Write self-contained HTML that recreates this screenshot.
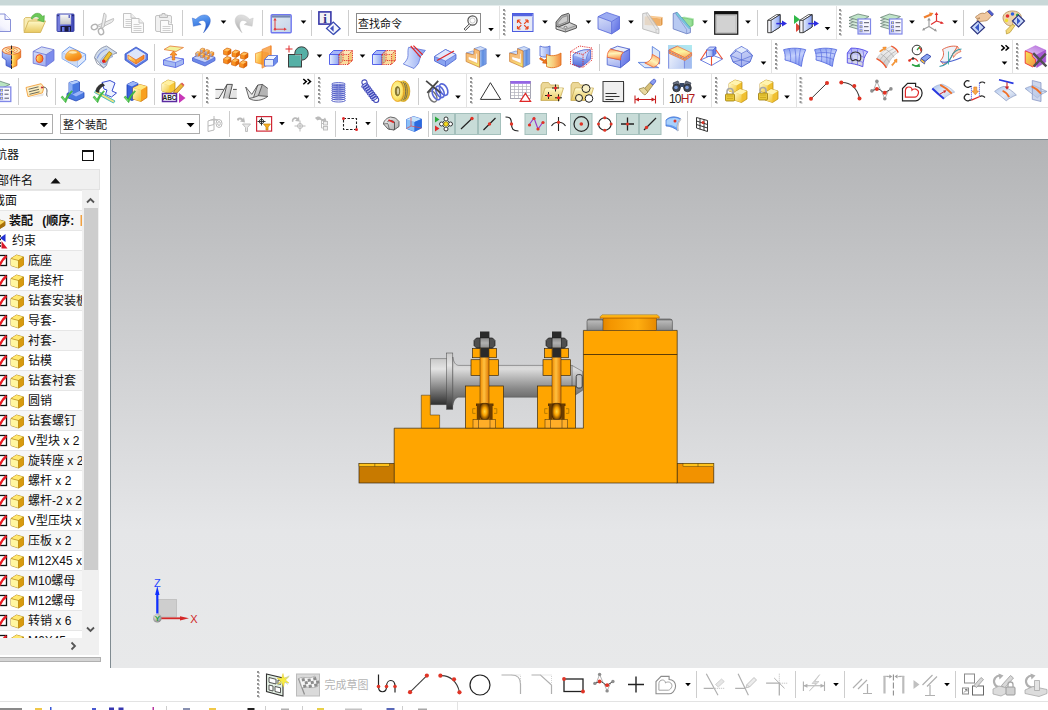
<!DOCTYPE html>
<html lang="zh-CN"><head><meta charset="utf-8"><title>NX</title>
<style>
html,body{margin:0;padding:0;}
body{width:1048px;height:710px;overflow:hidden;background:#fff;position:relative;
 font-family:"Liberation Sans","Noto Sans CJK SC",sans-serif;font-size:12px;color:#111;}
.abs{position:absolute;}
#topbar{left:0;top:0;width:1048px;height:5px;background:#c9d8d8;}
.hl{left:0;width:1048px;height:1px;background:#e3e3e3;}
svg{position:absolute;left:0;top:0;overflow:visible;}
.combo{border:1px solid #adadad;background:#fff;height:18px;box-sizing:content-box;}
.combo span{position:absolute;left:2px;top:1px;line-height:18px;font-size:11px;white-space:nowrap;}
#left{left:0;top:140px;width:110px;height:528px;background:#fff;overflow:hidden;}
#view{left:110px;top:139px;width:938px;height:529px;border-left:1px solid #808b91;border-top:1px solid #808b91;box-sizing:border-box;
 background:linear-gradient(to bottom,rgb(179,180,182) 0%,rgb(229,230,232) 74%,rgb(232,233,234) 100%);}
.row{position:absolute;left:0;width:82px;height:20px;border-top:1px solid #e6e6e6;box-sizing:border-box;white-space:nowrap;overflow:hidden;}
.row.alt{background:#f6f6f6;}
.row span{position:absolute;top:1px;line-height:19px;font-size:12px;}
</style></head><body>
<div id="topbar" class="abs"></div><div class="abs" style="left:0;top:5px;width:1048px;height:1px;background:#e4ecec"></div>

<div class="abs hl" style="top:39px"></div>
<div class="abs hl" style="top:73px"></div>
<div class="abs hl" style="top:107px"></div>
<div class="abs" style="left:0;top:139px;width:110px;height:1px;background:#808b91"></div>
<svg id="tb" width="1048" height="140" viewBox="0 0 1048 140">
<defs>
<linearGradient id="gB" x1="0" y1="0" x2="1" y2="1"><stop offset="0" stop-color="#dfe8ff"/><stop offset="1" stop-color="#5f7fe6"/></linearGradient>
<linearGradient id="gB2" x1="0" y1="0" x2="0" y2="1"><stop offset="0" stop-color="#c4d4ff"/><stop offset="1" stop-color="#4a66d8"/></linearGradient>
<linearGradient id="gBs" x1="0" y1="0" x2="0.300" y2="1"><stop offset="0" stop-color="#8098f0"/><stop offset="0.500" stop-color="#c4d0fc"/><stop offset="1" stop-color="#8ea2f4"/></linearGradient>
<linearGradient id="gNew" x1="1" y1="0" x2="0.200" y2="1"><stop offset="0" stop-color="#ffffff"/><stop offset="0.600" stop-color="#f4f4fe"/><stop offset="1" stop-color="#c8ccf4"/></linearGradient><linearGradient id="gSave" x1="0" y1="0" x2="1" y2="0"><stop offset="0" stop-color="#7c84e0"/><stop offset="0.500" stop-color="#5860cc"/><stop offset="1" stop-color="#4048b4"/></linearGradient>
<linearGradient id="gUndo" x1="0" y1="0" x2="0.300" y2="1"><stop offset="0" stop-color="#78b0f8"/><stop offset="0.500" stop-color="#4888e8"/><stop offset="1" stop-color="#2050c0"/></linearGradient><linearGradient id="gRedo" x1="0" y1="0" x2="0.300" y2="1"><stop offset="0" stop-color="#e8e8e8"/><stop offset="0.600" stop-color="#cccccc"/><stop offset="1" stop-color="#b0b0b0"/></linearGradient>
<linearGradient id="gOy" x1="0" y1="0" x2="1" y2="0.300"><stop offset="0" stop-color="#fff0a0"/><stop offset="0.500" stop-color="#fcb840"/><stop offset="1" stop-color="#f08020"/></linearGradient><linearGradient id="gOd" x1="0.200" y1="0" x2="0.800" y2="1"><stop offset="0" stop-color="#ffd878"/><stop offset="0.500" stop-color="#f8a028"/><stop offset="1" stop-color="#f07810"/></linearGradient><linearGradient id="gBp" x1="0" y1="0" x2="0.300" y2="1"><stop offset="0" stop-color="#d4dcf8"/><stop offset="1" stop-color="#a8b4f0"/></linearGradient>
<linearGradient id="gBr" x1="0" y1="0" x2="1" y2="0"><stop offset="0" stop-color="#a8c4f0"/><stop offset="0.500" stop-color="#5c8ce0"/><stop offset="1" stop-color="#88a8e8"/></linearGradient><linearGradient id="gOs" x1="0" y1="0" x2="0.200" y2="1"><stop offset="0" stop-color="#f8b878"/><stop offset="0.600" stop-color="#f8c070"/><stop offset="1" stop-color="#f4e470"/></linearGradient>
<linearGradient id="gBv" x1="0" y1="0" x2="1" y2="1"><stop offset="0" stop-color="#98a8f4"/><stop offset="1" stop-color="#5868e0"/></linearGradient>
<linearGradient id="gBl" x1="0" y1="0" x2="0.150" y2="1"><stop offset="0" stop-color="#f89858"/><stop offset="0.450" stop-color="#fff4b8"/><stop offset="1" stop-color="#f89048"/></linearGradient>
<linearGradient id="gBl2" x1="0.800" y1="0" x2="0.200" y2="1"><stop offset="0" stop-color="#f8a868"/><stop offset="0.500" stop-color="#fff4b8"/><stop offset="1" stop-color="#f8a058"/></linearGradient>
<linearGradient id="gBl3" x1="0.300" y1="0" x2="0.600" y2="1"><stop offset="0" stop-color="#fcd080"/><stop offset="0.500" stop-color="#fcf4a0"/><stop offset="1" stop-color="#f8b868"/></linearGradient>
<linearGradient id="gCy" x1="1" y1="0" x2="0.500" y2="1"><stop offset="0" stop-color="#b0ecf0"/><stop offset="1" stop-color="#a8c0f0"/></linearGradient>
<linearGradient id="gBp2" x1="0" y1="0" x2="1" y2="0.500"><stop offset="0" stop-color="#eef2fc"/><stop offset="1" stop-color="#c0d0f4"/></linearGradient>
<linearGradient id="gSew" x1="0" y1="0" x2="1" y2="0"><stop offset="0" stop-color="#f4f4a8"/><stop offset="0.500" stop-color="#f8c878"/><stop offset="1" stop-color="#f08840"/></linearGradient>
<linearGradient id="gS3" x1="0" y1="0" x2="0.200" y2="1"><stop offset="0" stop-color="#a8a8f8"/><stop offset="0.500" stop-color="#d0d4f8"/><stop offset="1" stop-color="#d4d4dc"/></linearGradient>
<linearGradient id="gSf" x1="0" y1="0" x2="1" y2="1"><stop offset="0" stop-color="#a8c0ec"/><stop offset="0.500" stop-color="#e4ecf8"/><stop offset="1" stop-color="#b0c0e0"/></linearGradient>
<linearGradient id="gPu" x1="0" y1="1" x2="1" y2="0"><stop offset="0" stop-color="#e4d0f4"/><stop offset="1" stop-color="#b468dc"/></linearGradient><linearGradient id="gYo" x1="0" y1="0" x2="1" y2="1"><stop offset="0" stop-color="#f8e858"/><stop offset="1" stop-color="#f09040"/></linearGradient>
<linearGradient id="gTag" x1="0" y1="0" x2="1" y2="1"><stop offset="0" stop-color="#fdf8e0"/><stop offset="1" stop-color="#f8e098"/></linearGradient>
<linearGradient id="gWcs" x1="0" y1="0" x2="1" y2="1"><stop offset="0" stop-color="#e0eaf2"/><stop offset="1" stop-color="#c4d4e8"/></linearGradient>
<radialGradient id="gDisc" cx="0.450" cy="0.450" r="0.650"><stop offset="0" stop-color="#fffac0"/><stop offset="0.600" stop-color="#fce870"/><stop offset="1" stop-color="#f0b828"/></radialGradient>
<linearGradient id="gB3" x1="0" y1="0" x2="1" y2="0"><stop offset="0" stop-color="#e6eeff"/><stop offset="1" stop-color="#8aa2f0"/></linearGradient>
<linearGradient id="gY" x1="0" y1="0" x2="1" y2="1"><stop offset="0" stop-color="#fffbd0"/><stop offset="1" stop-color="#f2c430"/></linearGradient>
<linearGradient id="gY2" x1="0" y1="0" x2="0" y2="1"><stop offset="0" stop-color="#fff3a0"/><stop offset="1" stop-color="#eaa800"/></linearGradient>
<linearGradient id="gO" x1="0" y1="0" x2="1" y2="1"><stop offset="0" stop-color="#ffe29a"/><stop offset="1" stop-color="#f07c10"/></linearGradient>
<linearGradient id="gO2" x1="0" y1="0" x2="0" y2="1"><stop offset="0" stop-color="#ffd27a"/><stop offset="1" stop-color="#ee7a10"/></linearGradient>
<linearGradient id="gG" x1="0" y1="0" x2="1" y2="1"><stop offset="0" stop-color="#f4f4f4"/><stop offset="1" stop-color="#a8a8a8"/></linearGradient>
<linearGradient id="gG2" x1="0" y1="0" x2="0" y2="1"><stop offset="0" stop-color="#fafafa"/><stop offset="1" stop-color="#c4c4c4"/></linearGradient>
<linearGradient id="gFold" x1="0" y1="0" x2="0" y2="1"><stop offset="0" stop-color="#fff9c8"/><stop offset="1" stop-color="#e8c860"/></linearGradient>
<linearGradient id="gCyl" x1="0" y1="0" x2="0" y2="1"><stop offset="0" stop-color="#c9c9c9"/><stop offset="0.22" stop-color="#e4e4e4"/><stop offset="0.6" stop-color="#8c8c8c"/><stop offset="1" stop-color="#2e2e2e"/></linearGradient>
<linearGradient id="gCyl2" x1="0" y1="0" x2="0" y2="1"><stop offset="0" stop-color="#c4c4c4"/><stop offset="0.25" stop-color="#dcdcdc"/><stop offset="0.65" stop-color="#8a8a8a"/><stop offset="1" stop-color="#545454"/></linearGradient>
<linearGradient id="gRod" x1="0" y1="0" x2="1" y2="0"><stop offset="0" stop-color="#f08c00"/><stop offset="0.45" stop-color="#ffc040"/><stop offset="1" stop-color="#e07800"/></linearGradient>
<radialGradient id="gBall" cx="0.5" cy="0.5" r="0.55"><stop offset="0" stop-color="#ffd848"/><stop offset="0.45" stop-color="#f8a000"/><stop offset="1" stop-color="#5a3000"/></radialGradient><linearGradient id="gNut" x1="0" y1="0" x2="0" y2="1"><stop offset="0" stop-color="#8c8c8c"/><stop offset="0.500" stop-color="#b0b0b0"/><stop offset="1" stop-color="#909090"/></linearGradient><linearGradient id="gBolt" x1="0" y1="0" x2="0" y2="1"><stop offset="0" stop-color="#6e6e6e"/><stop offset="0.200" stop-color="#b6b6b6"/><stop offset="1" stop-color="#8a8a8a"/></linearGradient><linearGradient id="gCap" x1="0" y1="0" x2="1" y2="0"><stop offset="0" stop-color="#e48600"/><stop offset="0.150" stop-color="#f49600"/><stop offset="0.650" stop-color="#ffae10"/><stop offset="1" stop-color="#e88a00"/></linearGradient><linearGradient id="gLip" x1="0" y1="0" x2="0" y2="1"><stop offset="0" stop-color="#ffcc30"/><stop offset="0.500" stop-color="#ffb010"/><stop offset="1" stop-color="#e88800"/></linearGradient>
<radialGradient id="gSph" cx="0.4" cy="0.35" r="0.7"><stop offset="0" stop-color="#f0f0f0"/><stop offset="1" stop-color="#808080"/></radialGradient>
</defs><g transform="translate(0,13.5)"><path d="M-12 0.500H5L10.500 6V18H-12z" fill="url(#gNew)" stroke="#7c84d4" stroke-width=".9"/><path d="M5 0.500V6H10.500" fill="#f4f4ff" stroke="#7c84d4" stroke-width=".9"/></g><g transform="translate(23,13.5)"><path d="M1 18V5.500l1.500-1.500h5l1.500 1.500h8v3" fill="#f8ecb4" stroke="#d8bc68" stroke-width=".9"/><path d="M1 19l4.500-11.500h17l-5 11.500z" fill="url(#gFold)" stroke="#d4b458" stroke-width=".9"/><path d="M8 4.500c2.500-5.500 9-6.500 11.500-1.500l1.800-1 -0.300 6.500-6.500-2 2-1.200c-2-3-5.500-2.500-7.500 0.500z" fill="#6cc858" stroke="#48a43c" stroke-width=".6"/></g><g transform="translate(55.5,13.5)"><rect x="1.500" y="0.500" width="17" height="17.500" rx=".8" fill="url(#gSave)" stroke="#3038a0" stroke-width=".9"/><rect x="4.500" y="1" width="11" height="10" fill="url(#gG2)" stroke="#8890d8" stroke-width=".5"/><rect x="13" y="1.500" width="1.500" height="3" fill="#6068c0"/><rect x="5" y="12.500" width="10.500" height="5.500" fill="#1a1a3c"/><rect x="6.500" y="13.500" width="2.500" height="4.500" fill="#6878e8"/><rect x="13" y="13.500" width="1.500" height="4.500" fill="#5060c8"/><rect x="2" y="1.500" width="1.200" height="1.200" fill="#1a1a50"/><rect x="16.800" y="1.500" width="1.200" height="1.200" fill="#1a1a50"/></g><rect x="83" y="10" width="1" height="26" fill="#cdcdcd"/><g transform="translate(90.5,13)"><g fill="#fff" stroke="#b4b4b4" stroke-width="1.400"><ellipse cx="4" cy="14" rx="3.200" ry="2.600" transform="rotate(-25 4 14)"/><ellipse cx="10.500" cy="18.500" rx="2.600" ry="3.200" transform="rotate(-15 10.500 18.500)"/></g><path d="M6.500 12.500l16.500-7c0.500 1.500-0.500 3-2 4l-10 5z" fill="#e9e9e9" stroke="#b4b4b4" stroke-width=".8"/><path d="M10.500 15.500l3-15.500c1.500 0.500 2.500 2 2 4.500l-2 9.500z" fill="#e9e9e9" stroke="#b4b4b4" stroke-width=".8"/></g><g transform="translate(123,13)"><g transform="translate(0,0)"><path d="M0.500 0.500h7.500l4.500 4.500v9.500h-12z" fill="#fbfbfb" stroke="#c4c4c4"/><path d="M8 0.500v4.500h4.500" fill="#f0f0f0" stroke="#c4c4c4"/><path d="M2.500 6.500h6M2.500 8.500h8M2.500 10.500h8M2.500 12.500h8" stroke="#d0d0d0"/></g><g transform="translate(8,5)"><path d="M0.500 0.500h7.500l4.500 4.500v9.500h-12z" fill="#fbfbfb" stroke="#c4c4c4"/><path d="M8 0.500v4.500h4.500" fill="#f0f0f0" stroke="#c4c4c4"/><path d="M2.500 6.500h6M2.500 8.500h8M2.500 10.500h8M2.500 12.500h8" stroke="#d0d0d0"/></g></g><g transform="translate(155,13)"><rect x="0.500" y="2.500" width="16" height="16" rx="1.500" fill="#f1f1f1" stroke="#c4c4c4"/><path d="M4.500 4.500v-2.500h2.500v-1.500h3v1.500h2.500v2.500z" fill="#e4e4e4" stroke="#bcbcbc"/><path d="M5.500 7.500h8l4 4v8h-12z" fill="#fbfbfb" stroke="#c4c4c4"/><path d="M13.500 7.500v4h4" fill="#f0f0f0" stroke="#c4c4c4"/><path d="M7.500 13.500h8M7.500 15.500h8M7.500 17.500h8" stroke="#d0d0d0"/></g><rect x="182" y="10" width="1" height="26" fill="#cdcdcd"/><g transform="translate(192,14.5)"><path d="M0.300 3.500L1.400 11.800L9.200 10L6.300 7.800C8 5.800 11.500 5.200 13 7.200C15 10 13.500 14 11.500 18.300C16 13.500 19.800 8 17.800 3.500C15.800-0.800 9-0.800 3.800 4.800Z" fill="url(#gUndo)" stroke="#2c5cc4" stroke-width=".4"/></g><path d="M220.7 20.5h5.600l-2.800 3.200z" fill="#000"/><g transform="translate(235,14.5)"><g transform="translate(18.500,0) scale(-1,1)"><path d="M0.300 3.500L1.400 11.800L9.200 10L6.300 7.800C8 5.800 11.500 5.200 13 7.200C15 10 13.500 14 11.500 18.300C16 13.500 19.800 8 17.800 3.500C15.800-0.800 9-0.800 3.800 4.800Z" fill="url(#gRedo)" stroke="#c0c0c0" stroke-width=".4"/></g></g><rect x="262" y="10" width="1" height="26" fill="#cdcdcd"/><g transform="translate(270.5,14)"><rect x="0.700" y="0.700" width="20" height="18" rx="1" fill="url(#gWcs)" stroke="#7078f0" stroke-width="1.400"/><rect x="1.400" y="1.400" width="18.600" height="2.200" fill="#7488b0"/><path d="M4.500 5.500v9.700h10" fill="none" stroke="#e04040" stroke-width="1"/><path d="M4.500 3.800l-1.600 2.800h3.200zM16.300 15.200l-2.800-1.600v3.200z" fill="#e04040"/><circle cx="4.500" cy="15.200" r="1.200" fill="#e04040"/></g><path d="M300.7 20.5h5.600l-2.800 3.200z" fill="#000"/><rect x="311" y="10" width="1" height="26" fill="#cdcdcd"/><g transform="translate(318,10.5)"><rect x="0.900" y="1.400" width="12" height="12.200" fill="#f2f2f4" stroke="#3838a8" stroke-width="1.600"/><text x="7" y="12" font-family="Liberation Serif,serif" font-weight="bold" font-size="13" text-anchor="middle" fill="#303088" style="opacity:.99">i</text><path d="M9.500 18.500l6.500-6.500 7 6.500-7 6z" fill="#8098d8"/><path d="M8.500 18l6.800-6.500 6.700 6.500-6.700 6z" fill="#f4f6fc" stroke="#3848b0" stroke-width="1.200"/><path d="M12 18l3.600-3.300v6.600z" fill="#4050c0"/></g><rect x="348" y="10" width="1" height="26" fill="#cdcdcd"/><path d="M488.2 28.0h5.600l-2.800 3.200z" fill="#000"/><rect x="499" y="6" width="1" height="33" fill="#e2e2e2"/><rect x="504" y="10" width="2" height="2" fill="#d2d2d2"/><rect x="503" y="9" width="2" height="2" fill="#949494"/><rect x="504" y="14" width="2" height="2" fill="#d2d2d2"/><rect x="503" y="13" width="2" height="2" fill="#949494"/><rect x="504" y="18" width="2" height="2" fill="#d2d2d2"/><rect x="503" y="17" width="2" height="2" fill="#949494"/><rect x="504" y="22" width="2" height="2" fill="#d2d2d2"/><rect x="503" y="21" width="2" height="2" fill="#949494"/><rect x="504" y="26" width="2" height="2" fill="#d2d2d2"/><rect x="503" y="25" width="2" height="2" fill="#949494"/><rect x="504" y="30" width="2" height="2" fill="#d2d2d2"/><rect x="503" y="29" width="2" height="2" fill="#949494"/><rect x="504" y="34" width="2" height="2" fill="#d2d2d2"/><rect x="503" y="33" width="2" height="2" fill="#949494"/><g transform="translate(512,13)"><rect x="0.500" y="0.500" width="20.500" height="18" fill="#e6eaf6" stroke="#4c5ce0"/><rect x="1" y="1" width="19.500" height="2" fill="#5464e0"/><rect x="1" y="3" width="19.500" height="1" fill="#c4ccf4"/><path d="M5.5 7l3.8 3.8M5.5 7h3M5.5 7v3" stroke="#e84820" stroke-width="1.200" fill="none"/><path d="M16 7l-3.8 3.8M16 7h-3M16 7v3" stroke="#e84820" stroke-width="1.200" fill="none"/><path d="M5.5 16l3.8 -3.8M5.5 16h3M5.5 16v-3" stroke="#e84820" stroke-width="1.200" fill="none"/><path d="M16 16l-3.8 -3.8M16 16h-3M16 16v-3" stroke="#e84820" stroke-width="1.200" fill="none"/></g><path d="M542.2 20.5h5.600l-2.800 3.200z" fill="#000"/><g transform="translate(555,12.5)"><path d="M1 13.500V9.500L6.500 3L13.500 0.800L14.500 2V10L3.500 14.500Z" fill="#b0b0b0" stroke="#484848" stroke-width=".9"/><path d="M3 12.800V10L7.500 4.800L12.500 3.200V9Z" fill="#cdcdcd" stroke="#707070" stroke-width=".6"/><path d="M1 13.500L3.500 14.500L14.500 10L21.500 13V15.500L10.500 19.500L1 16.500Z" fill="url(#gG)" stroke="#484848" stroke-width=".9"/><path d="M3.500 14.500L10.500 17L21.500 13M10.500 17V19.500" fill="none" stroke="#707070" stroke-width=".6"/><ellipse cx="10.500" cy="14.800" rx="1.500" ry=".9" fill="#fff" stroke="#444" stroke-width=".6"/></g><path d="M585.7 20.5h5.600l-2.800 3.200z" fill="#000"/><g transform="translate(598,11)"><path d="M0 5.700L13.600 10.700V22.900L0 17.900Z" fill="url(#gBp)"/><path d="M0 5.700L8.600 1.400L21.500 5.700L13.600 10.700Z" fill="#9cacf2"/><path d="M13.600 10.700L21.500 5.700V17.900L13.600 22.900Z" fill="url(#gBv)"/><path d="M0 5.700L8.600 1.400L21.500 5.700V17.900L13.600 22.900L0 17.900ZM0 5.700L13.600 10.700L21.500 5.700M13.600 10.700V22.900" fill="none" stroke="#5466d8" stroke-width=".8"/></g><path d="M628.2 20.5h5.600l-2.800 3.200z" fill="#000"/><g transform="translate(642,11)"><path d="M2.600 5.500L6 4.500L20.500 6L18.800 7.400Z" fill="#f8c890"/><path d="M2.600 5.500L18.800 7.400V15L2.600 14Z" fill="#f0b068"/><path d="M18.800 7.400L20.500 6V13.500L18.800 15Z" fill="#e09848"/><path d="M0.700 2.600L5.500 1.700L16.900 17.900V22.700L13 21.700L0.700 17.900Z" fill="#e2e2e2" fill-opacity=".78" stroke="#b4b4b4" stroke-width=".8"/><path d="M5.500 1.700L4 3L14 18.500L16.900 17.900M14 18.500V22" fill="none" stroke="#c0c0c0" stroke-width=".7"/></g><g transform="translate(673,11)"><path d="M8.800 6.500L11 5.500L20.500 7.200L19.300 8.400Z" fill="#c0f0c0"/><path d="M8.800 6.500L19.300 8.400V15L14.500 16Z" fill="#98e098" stroke="#58b058" stroke-width=".6"/><path d="M19.300 8.400L20.500 7.200V14L19.300 15Z" fill="#70c870"/><path d="M0.200 2.600L4 1.300L17.400 17V21.700L13.600 22.700L0.200 17.900Z" fill="#b8caf2" stroke="#6478c0" stroke-width=".8"/><path d="M4 1.300L2.800 2.800L13.600 18.500V22.700" fill="none" stroke="#7088c8" stroke-width=".6"/><path d="M4 1.300L17.400 17L15.800 17.600L2.800 2.800Z" fill="#78ccdc" stroke="#48a0b8" stroke-width=".4"/></g><path d="M702.2 20.5h5.600l-2.800 3.200z" fill="#000"/><g transform="translate(714,11)"><rect x="0.700" y="0.700" width="23" height="22.500" fill="#d2d2d2" stroke="#222" stroke-width="1.300"/><rect x="0.500" y="0.500" width="23.400" height="2.800" fill="#111"/><rect x="2.500" y="4.500" width="19.500" height="17" fill="none" stroke="#bdbdbd"/></g><path d="M745.2 20.5h5.600l-2.800 3.200z" fill="#000"/><rect x="757" y="10" width="1" height="26" fill="#cdcdcd"/><g transform="translate(766.5,13)"><path d="M1.200 7.300L4.600 7.300L13.600 1.600V14L4.600 19.700H1.200Z" fill="#f4f4f8" stroke="#2c2c2c" stroke-width=".9"/><path d="M4.600 7.300L13.600 1.600V14L4.600 19.700Z" fill="url(#gB3)" stroke="#2c2c2c" stroke-width=".8"/><path d="M1.200 7.300L10 1.600H13.600" fill="none" stroke="#2c2c2c" stroke-width=".8"/><path d="M9.800 10.600h7" stroke="#2c2ce0" stroke-width="1.500"/><path d="M20.500 10.600l-5-3v6z" fill="#2c2ce0"/></g><g transform="translate(793.5,13)"><path d="M0.500 2l6 4.500-6 4.500z" fill="#30b848"/><path d="M2.500 10l5.500 4.500-5.500 4.500z" fill="#e04838"/><g transform="translate(5,0)"><path d="M1.200 7.300L4.600 7.300L13.600 1.600V14L4.600 19.700H1.200Z" fill="#f4f4f8" stroke="#2c2c2c" stroke-width=".9"/><path d="M4.600 7.300L13.600 1.600V14L4.600 19.700Z" fill="url(#gB3)" stroke="#2c2c2c" stroke-width=".8"/><path d="M1.200 7.300L10 1.600H13.600" fill="none" stroke="#2c2c2c" stroke-width=".8"/><path d="M9.800 10.600h7" stroke="#2c2ce0" stroke-width="1.500"/><path d="M20.500 10.600l-5-3v6z" fill="#2c2ce0"/></g></g><path d="M824.7 27.0h5.600l-2.800 3.200z" fill="#000"/><rect x="836" y="6" width="1" height="33" fill="#e2e2e2"/><rect x="840" y="10" width="2" height="2" fill="#d2d2d2"/><rect x="839" y="9" width="2" height="2" fill="#949494"/><rect x="840" y="14" width="2" height="2" fill="#d2d2d2"/><rect x="839" y="13" width="2" height="2" fill="#949494"/><rect x="840" y="18" width="2" height="2" fill="#d2d2d2"/><rect x="839" y="17" width="2" height="2" fill="#949494"/><rect x="840" y="22" width="2" height="2" fill="#d2d2d2"/><rect x="839" y="21" width="2" height="2" fill="#949494"/><rect x="840" y="26" width="2" height="2" fill="#d2d2d2"/><rect x="839" y="25" width="2" height="2" fill="#949494"/><rect x="840" y="30" width="2" height="2" fill="#d2d2d2"/><rect x="839" y="29" width="2" height="2" fill="#949494"/><rect x="840" y="34" width="2" height="2" fill="#d2d2d2"/><rect x="839" y="33" width="2" height="2" fill="#949494"/><g transform="translate(848.5,11.5)"><path d="M0.500 15l9-3.500 11 2.500-8 4.500z" fill="#d4e8d8" stroke="#5a7468" stroke-width=".7"/><path d="M0.500 12l9-3.500 11 2.500-8 4.500z" fill="#d4e8d8" stroke="#5a7468" stroke-width=".7"/><path d="M0.500 9l9-3.500 11 2.500-8 4.500z" fill="#d4e8d8" stroke="#5a7468" stroke-width=".7"/><path d="M0.500 6l9-3.500 11 2.500-8 4.500z" fill="#c0e4c8" stroke="#5a7468" stroke-width=".7"/><rect x="9.500" y="7.500" width="12.500" height="15" fill="url(#gNew)" stroke="#8088e8" stroke-width="1.200"/><g fill="#7880dc"><rect x="11" y="9.800" width="3" height="2.800"/><rect x="11" y="13.800" width="3" height="2.800"/><rect x="11" y="17.800" width="3" height="2.800"/></g><g fill="#f8f060"><rect x="12" y="10.700" width="1.200" height="1.200"/><rect x="12" y="14.700" width="1.200" height="1.200"/><rect x="12" y="18.700" width="1.200" height="1.200"/></g><path d="M15.500 11.200h5M15.500 15.200h4.500M15.500 19.200h5" stroke="#55556a" stroke-width="1"/></g><g transform="translate(880,11.5)"><path d="M0.500 15l9-3.500 11 2.500-8 4.500z" fill="#d4e8d8" stroke="#5a7468" stroke-width=".7"/><path d="M0.500 12l9-3.500 11 2.500-8 4.500z" fill="#d4e8d8" stroke="#5a7468" stroke-width=".7"/><path d="M0.500 9l9-3.500 11 2.500-8 4.500z" fill="#d4e8d8" stroke="#5a7468" stroke-width=".7"/><path d="M0.500 6l9-3.500 11 2.500-8 4.500z" fill="#c0e4c8" stroke="#5a7468" stroke-width=".7"/><rect x="9.500" y="7.500" width="12.500" height="15" fill="url(#gNew)" stroke="#8088e8" stroke-width="1.200"/><g fill="#7880dc"><rect x="11" y="9.800" width="3" height="2.800"/><rect x="11" y="13.800" width="3" height="2.800"/><rect x="11" y="17.800" width="3" height="2.800"/></g><g fill="#f8f060"><rect x="12" y="10.700" width="1.200" height="1.200"/><rect x="12" y="14.700" width="1.200" height="1.200"/><rect x="12" y="18.700" width="1.200" height="1.200"/></g><path d="M15.500 11.200h5M15.500 15.200h4.500M15.500 19.200h5" stroke="#55556a" stroke-width="1"/></g><path d="M909.2 20.5h5.600l-2.800 3.200z" fill="#000"/><g transform="translate(922,13)"><path d="M7 13.500v-7M7 13.500l-6 3M7 13.500l6.500 4" stroke="#9a9a9a" stroke-width="1.100" fill="none"/><path d="M7 4.500l-1.800 3h3.600zM0 17.500l3.200-0.200-1.500-2.600zM15 18.500l-3-0.500 1.600-2.500z" fill="#9a9a9a"/><path d="M14.500 8v-7M14.500 8l-5.500 3.500M14.500 8l6 2" stroke="#e03030" stroke-width="1.200" fill="none"/><path d="M14.500 -1l-1.800 3h3.600zM22 10.500l-3-2.200-0.800 2.800z" fill="#e03030"/><path d="M2 4.500l7-3" stroke="#f08030" stroke-width="2.400"/><path d="M11.500 0l-4.500-0.500 1.800 4z" fill="#f08030"/></g><path d="M952.2 20.5h5.600l-2.800 3.200z" fill="#000"/><rect x="963" y="10" width="1" height="26" fill="#cdcdcd"/><g transform="translate(970.5,11)"><path d="M7 4.500c2-2 5-3 7-2l3.500-2.500 4.500 4-3 3c-1 2-3 3-5 3l-5 0.500c-2 0-3-1-2.500-2l3-1.500-3.500 0.500c-1.500-0.500-1-2.500 1-3z" fill="#f0c8a0" stroke="#a87848" stroke-width=".7"/><path d="M17 0.500l2-1.500 4 4-1.500 2z" fill="#5060d0" stroke="#303890" stroke-width=".6"/><path d="M0.500 16.500l7-6.500 6.500 6.500-7 6.500z" fill="#c8d8f8" stroke="#2c3480" stroke-width="1.200"/><path d="M4.500 16.500l4-4v8z" fill="#3a58c8"/></g><g transform="translate(1001,10.5)"><path d="M2 7c0-4 5-7 10.500-6.500s8.500 3.500 7.500 7.500c-0.800 3-4 3-6 2.500-2.500-0.500-3 1.500-2 3 0.800 1.500-1 2.500-3 2-4-1-7-4.500-7-8.500z" fill="#f0d4a8" stroke="#b08850" stroke-width=".8"/><circle cx="6.500" cy="5.500" r="1.800" fill="#e03030"/><circle cx="11.500" cy="3.500" r="1.800" fill="#3060e0"/><circle cx="5.500" cy="10" r="1.700" fill="#f0e030"/><circle cx="16.500" cy="4.500" r="1.600" fill="#30a840"/><path d="M5 20l6-6 3 1-5 7-3.500 1.500z" fill="#f4d878" stroke="#b89830" stroke-width=".7"/><path d="M11.500 10.500l6-6 6 6-6 6z" fill="#c8d8f8" stroke="#2c3480" stroke-width="1.200"/><path d="M19.500 10.500l-3.500-3.500v7z" fill="#3a58c8"/></g><g transform="translate(2,45.5)"><path d="M0.300 5.500v6.500l3.700 2.500v5.500l5.500 2.500v-18z" fill="url(#gB2)" stroke="#3048c0" stroke-width=".7"/><path d="M18.700 5.500v6.500l-3.700 2.500v5.500l-5.500 2.500v-18z" fill="url(#gOy)" stroke="#d85818" stroke-width=".7"/><ellipse cx="9.500" cy="5" rx="9.200" ry="3.800" fill="#fbe4b8" stroke="#e05818" stroke-width=".8"/><ellipse cx="9.500" cy="5" rx="6" ry="2.400" fill="none" stroke="#f08838" stroke-width=".8"/><ellipse cx="9.500" cy="5" rx="3" ry="1.200" fill="none" stroke="#e86020" stroke-width=".7"/><path d="M9.500 0v23.500" stroke="#222" stroke-width="1" stroke-dasharray="3.500 1.500"/><path d="M10.700 3v19" stroke="#f8e468" stroke-width="1.200" stroke-dasharray="2.500 1.200"/></g><g transform="translate(33,45.5)"><path d="M0.200 5.900L8.600 1.300L21 4.200L13.100 9.200Z" fill="#d4dcf4"/><path d="M0.200 5.900L13.100 9.200V20.800L0.200 17.800Z" fill="url(#gBp)"/><path d="M13.100 9.200L21 4.200V15L13.100 20.800Z" fill="#7c8cec"/><path d="M0.200 5.900L8.600 1.300L21 4.200V15L13.100 20.800L0.200 17.800ZM0.200 5.900L13.100 9.200L21 4.200M13.100 9.200V20.800" fill="none" stroke="#6670d4" stroke-width=".8"/><ellipse cx="6.500" cy="13.100" rx="3.500" ry="4" fill="url(#gOy)" stroke="#e83820" stroke-width=".9"/></g><g transform="translate(62,45.5)"><path d="M0.200 7L7.500 1.300L23.600 8.800V14.500L15.500 21.800L0.200 13.200Z" fill="#dfe9fb" stroke="#5c8ce4" stroke-width=".9"/><path d="M0.200 7L15.500 15.500L23.600 8.800M15.500 15.500V21.800" fill="none" stroke="#8cb0f0" stroke-width=".7"/><path d="M0.200 7L15.500 15.500V21.800L0.200 13.200Z" fill="#c8d8f4" opacity=".8"/><path d="M3.300 11.500c0.500-3.500 3-6.800 7.500-7s8 2.500 8.700 6c0.500 2.500-3 5-8 5s-8.500-1.500-8.200-4z" fill="url(#gOd)" stroke="#f08828" stroke-width=".6"/><ellipse cx="10.800" cy="6.800" rx="4.200" ry="1.600" fill="#ffe6a8" stroke="#f0a040" stroke-width=".5"/></g><g transform="translate(94,45.5)"><path d="M0.500 12c2-6 6-10 12-11.500l10.500 7c-5 1-9 5-10.500 12.500l-3 2.500z" fill="#d0dcec" stroke="#8890a4" stroke-width=".9"/><path d="M0.500 12l2.500 6 7 4.500" fill="none" stroke="#8890a4" stroke-width=".9"/><path d="M3 13c2-5 5-8 10-9.500" fill="none" stroke="#8aa0e0" stroke-width="1.200"/><path d="M6 16.500c1.500-4 4-7 8-8.500l5 3c-4 1.500-6 4-7.500 8.500z" fill="#b8c8ec" stroke="#8a9ac8" stroke-width=".6"/><path d="M8.500 15l6.500-9 3 2-6.500 9z" fill="#f0c030" stroke="#a07808" stroke-width=".7"/><circle cx="9.800" cy="15.800" r="1.700" fill="#e02020"/></g><g transform="translate(124.5,45.5)"><path d="M0.500 8.500l11-7 11.500 7v6l-11.500 7.500-11-7.500z" fill="#5c7ce4" stroke="#3c58c8" stroke-width=".8"/><path d="M2.500 9l9-5.800 9.500 5.800v4.500l-9.500 6.200-9-6.200z" fill="#c4d2f6"/><path d="M2.500 9l9-5.800 9.500 5.800-9.500 5z" fill="#dde6fb"/><path d="M3.500 9.500l8 5 8-5v3.800l-8 5.200-8-5.200z" fill="url(#gOy)" stroke="#e86018" stroke-width=".7"/><path d="M11.500 14.500v4" stroke="#e86018" stroke-width=".6"/></g><g transform="translate(162.5,44.5)"><path d="M1.500 5l6-3.500 13.500 1.500-7.500 4z" fill="#f2f29a" stroke="#e88848" stroke-width=".9"/><path d="M1 15.500l7-3 13 2v5l-8 3.500-12-2.500z" fill="#a4b8f2" stroke="#4c5ce0" stroke-width=".8"/><path d="M1 15.500l7-3 13 2-8 3.500z" fill="#dce6fb" stroke="#4c5ce0" stroke-width=".6"/><path d="M13 18v5" stroke="#4c5ce0" stroke-width=".6"/><path d="M9.800 15.500v-5h-2.300l3.500-4 3.500 4h-2.300v5z" fill="#f8982c" stroke="#d86010" stroke-width=".6"/></g><g transform="translate(192,45.5)"><path d="M0.500 12.500l9-4.500 13.500 4v3l-10 5.500-12.500-5z" fill="#6c88e8" stroke="#4a62d0" stroke-width=".8"/><path d="M0.500 12.500l9-4.500 13.500 4-10 5z" fill="#c4d2f8" stroke="#4a62d0" stroke-width=".6"/><g transform="translate(8,2.5) scale(0.75)"><path d="M0 2l3-2 3.500 1v3.500l-3 2-3.500-1z" fill="#a8a8c0"/><path d="M0 2l3-2 3.500 1-3 2z" fill="#ffc868"/><path d="M3.500 3l3-2v3.500l-3 2z" fill="#f89020"/><path d="M0 2l3-2 3.500 1v3.500l-3 2-3.500-1z" fill="none" stroke="#c85808" stroke-width=".5"/></g><g transform="translate(12.5,4) scale(0.75)"><path d="M0 2l3-2 3.500 1v3.500l-3 2-3.500-1z" fill="#a8a8c0"/><path d="M0 2l3-2 3.500 1-3 2z" fill="#ffc868"/><path d="M3.500 3l3-2v3.500l-3 2z" fill="#f89020"/><path d="M0 2l3-2 3.500 1v3.500l-3 2-3.500-1z" fill="none" stroke="#c85808" stroke-width=".5"/></g><g transform="translate(17,6) scale(0.75)"><path d="M0 2l3-2 3.500 1v3.500l-3 2-3.500-1z" fill="#a8a8c0"/><path d="M0 2l3-2 3.500 1-3 2z" fill="#ffc868"/><path d="M3.500 3l3-2v3.500l-3 2z" fill="#f89020"/><path d="M0 2l3-2 3.500 1v3.500l-3 2-3.500-1z" fill="none" stroke="#c85808" stroke-width=".5"/></g><g transform="translate(3.5,6) scale(0.75)"><path d="M0 2l3-2 3.500 1v3.500l-3 2-3.500-1z" fill="#a8a8c0"/><path d="M0 2l3-2 3.500 1-3 2z" fill="#ffc868"/><path d="M3.500 3l3-2v3.500l-3 2z" fill="#f89020"/><path d="M0 2l3-2 3.500 1v3.500l-3 2-3.500-1z" fill="none" stroke="#c85808" stroke-width=".5"/></g><g transform="translate(8,7.5) scale(0.75)"><path d="M0 2l3-2 3.500 1v3.500l-3 2-3.500-1z" fill="#a8a8c0"/><path d="M0 2l3-2 3.500 1-3 2z" fill="#ffc868"/><path d="M3.500 3l3-2v3.500l-3 2z" fill="#f89020"/><path d="M0 2l3-2 3.500 1v3.500l-3 2-3.500-1z" fill="none" stroke="#c85808" stroke-width=".5"/></g><g transform="translate(12.5,9.5) scale(0.75)"><path d="M0 2l3-2 3.500 1v3.500l-3 2-3.500-1z" fill="#a8a8c0"/><path d="M0 2l3-2 3.500 1-3 2z" fill="#ffc868"/><path d="M3.500 3l3-2v3.500l-3 2z" fill="#f89020"/><path d="M0 2l3-2 3.500 1v3.500l-3 2-3.500-1z" fill="none" stroke="#c85808" stroke-width=".5"/></g></g><g transform="translate(223,46.5)"><g transform="translate(0.5,1.5) scale(1.15)"><path d="M0 2l3-2 3.500 1v3.500l-3 2-3.500-1z" fill="#f89020"/><path d="M0 2l3-2 3.500 1-3 2z" fill="#ffc060"/><path d="M3.500 3l3-2v3.500l-3 2z" fill="#e06808"/><path d="M0 2l3-2 3.500 1v3.500l-3 2-3.500-1z" fill="none" stroke="#c85808" stroke-width=".5"/></g><g transform="translate(9,3.5) scale(1.15)"><path d="M0 2l3-2 3.500 1v3.500l-3 2-3.500-1z" fill="#f89020"/><path d="M0 2l3-2 3.500 1-3 2z" fill="#ffc060"/><path d="M3.500 3l3-2v3.500l-3 2z" fill="#e06808"/><path d="M0 2l3-2 3.500 1v3.500l-3 2-3.500-1z" fill="none" stroke="#c85808" stroke-width=".5"/></g><g transform="translate(17.5,5.5) scale(1.15)"><path d="M0 2l3-2 3.500 1v3.500l-3 2-3.500-1z" fill="#f89020"/><path d="M0 2l3-2 3.500 1-3 2z" fill="#ffc060"/><path d="M3.500 3l3-2v3.500l-3 2z" fill="#e06808"/><path d="M0 2l3-2 3.500 1v3.500l-3 2-3.500-1z" fill="none" stroke="#c85808" stroke-width=".5"/></g><g transform="translate(0.5,10) scale(1.15)"><path d="M0 2l3-2 3.500 1v3.500l-3 2-3.500-1z" fill="#f89020"/><path d="M0 2l3-2 3.500 1-3 2z" fill="#ffc060"/><path d="M3.500 3l3-2v3.500l-3 2z" fill="#e06808"/><path d="M0 2l3-2 3.500 1v3.500l-3 2-3.500-1z" fill="none" stroke="#c85808" stroke-width=".5"/></g><g transform="translate(8.5,12) scale(1.15)"><path d="M0 2l3-2 3.500 1v3.500l-3 2-3.500-1z" fill="#f89020"/><path d="M0 2l3-2 3.500 1-3 2z" fill="#ffc060"/><path d="M3.500 3l3-2v3.500l-3 2z" fill="#e06808"/><path d="M0 2l3-2 3.500 1v3.500l-3 2-3.500-1z" fill="none" stroke="#c85808" stroke-width=".5"/></g><g transform="translate(16.5,14) scale(1.15)"><path d="M0 2l3-2 3.500 1v3.500l-3 2-3.500-1z" fill="#f89020"/><path d="M0 2l3-2 3.500 1-3 2z" fill="#ffc060"/><path d="M3.500 3l3-2v3.500l-3 2z" fill="#e06808"/><path d="M0 2l3-2 3.500 1v3.500l-3 2-3.500-1z" fill="none" stroke="#c85808" stroke-width=".5"/></g></g><g transform="translate(255,45.5)"><path d="M0.500 8l6-2 7 1.500v9l-6 2.500-7-2z" fill="url(#gOy)" stroke="#f08828" stroke-width=".7"/><path d="M7 4l9-3.800v17.500l-9 5z" fill="#f8a040" stroke="#f07818" stroke-width=".7" opacity=".85"/><g transform="translate(9.5,10)"><path d="M0 4h9v6.5h-9z" fill="#e4ecfc"/><path d="M0 4l4-4h9l-4 4z" fill="#f2f6ff"/><path d="M9 4l4-4v6.5l-4 4z" fill="#6c8cec"/><path d="M0 4h9v6.5h-9zM0 4l4-4h9l-4 4M13 0v6.5l-4 4" fill="none" stroke="#4c68d8" stroke-width=".8"/></g><path d="M16 0.200v9.500" stroke="#f07818" stroke-width=".8"/></g><g transform="translate(286,45.5)"><circle cx="15.500" cy="8" r="6.700" fill="#56b0a6" stroke="#3c3c3c" stroke-width="1"/><rect x="2.500" y="9" width="13" height="12.500" fill="#56b0a6" stroke="#3c3c3c" stroke-width="1"/><path d="M9 9.500h6v5.500" fill="none" stroke="#b8c8c4" stroke-width=".7"/><path d="M-0.500 3.500h7M3 0v7" stroke="#e02828" stroke-width="1"/></g><g transform="translate(329,50.0)"><path d="M0.500 4.500h9.500v10h-9.500z" fill="url(#gB3)"/><path d="M0.500 4.500l4-4h9.500l-4 4z" fill="#a8b8f8"/><path d="M0.500 4.500h9.500v10h-9.500zM0.500 4.500l4-4h9.500l-4 4" fill="none" stroke="#4454e8" stroke-width=".9"/><path d="M10 4.500h9.500v10h-9.500z" fill="#f8dc9c"/><path d="M10 4.500l4-4h9.500l-4 4z" fill="#fbe8b8"/><path d="M19.500 4.500l4-4v10l-4 4z" fill="#f4c878"/><path d="M10 4.500l3-3v10l-3 3z" fill="#b4ac90" opacity=".7"/><path d="M10 4.500h9.500v10h-9.500zM10 4.500l4-4h9.500l-4 4M23.500 0.500v10l-4 4M14 0.500v10h9.500M14 10.500l-4 4" fill="none" stroke="#e02828" stroke-width=".9" stroke-dasharray="1.200 1"/></g><g transform="translate(372,50.0)"><path d="M0.500 4.500h9.500v10h-9.500z" fill="url(#gB3)"/><path d="M0.500 4.500l4-4h9.500l-4 4z" fill="#a8b8f8"/><path d="M0.500 4.500h9.500v10h-9.500zM0.500 4.500l4-4h9.500l-4 4" fill="none" stroke="#4454e8" stroke-width=".9"/><path d="M10 4.500h9.500v10h-9.500z" fill="#f8dc9c"/><path d="M10 4.500l4-4h9.500l-4 4z" fill="#fbe8b8"/><path d="M19.500 4.500l4-4v10l-4 4z" fill="#f4c878"/><path d="M10 4.500l3-3v10l-3 3z" fill="#b4ac90" opacity=".7"/><path d="M10 4.500h9.500v10h-9.500zM10 4.500l4-4h9.500l-4 4M23.500 0.500v10l-4 4M14 0.500v10h9.500M14 10.500l-4 4" fill="none" stroke="#e02828" stroke-width=".9" stroke-dasharray="1.200 1"/></g><g transform="translate(403,45.5)"><path d="M5.700 1.800L22.400 4.900L17.500 11C16.500 14 16 17 15 18.500L11 23L0.300 18.500C3 16 5 13 5 10C5 6 4.800 4 5.700 1.800Z" fill="url(#gB3)" stroke="#5a72d8" stroke-width=".8"/><path d="M17.500 11l-3-1" stroke="#5a72d8" stroke-width=".6"/><path d="M7.700 0.500L17.700 11.900M10.400 0.100L19.700 9.200" stroke="#e02828" stroke-width="1.200"/></g><g transform="translate(434,46.5)"><path d="M0.500 10l11-7 10.500 5v4.500l-10.500 7.500-11-5.500z" fill="#8aa4f0" stroke="#4a62d0" stroke-width=".8"/><path d="M0.500 10l11-7 10.500 5-10.500 6.500z" fill="#dfe8fe" stroke="#4a62d0" stroke-width=".6"/><path d="M11.500 14.500v5.500" stroke="#4a62d0" stroke-width=".6"/><path d="M3 14l17-9.500" stroke="#e02828" stroke-width="1.300"/></g><g transform="translate(465.5,45.5)"><path d="M14 5.500L20.700 3.500V18.500L14 21.800Z" fill="url(#gBr)" stroke="#4c70c8" stroke-width=".6"/><path d="M8.500 3.200L15 1L20.700 3.500L14 5.500Z" fill="#cfdcf6" stroke="#5c80d0" stroke-width=".6"/><path d="M0.600 7.500L7 5.500L8.500 6V9.500Z" fill="#cfdcf6" stroke="#5c80d0" stroke-width=".6"/><path d="M0.600 7.500L8.500 9.500V3.200L14 5.500V21.800L0.600 16Z" fill="url(#gOs)" stroke="#c87830" stroke-width=".7"/><path d="M2.800 11L10.500 13V7.500L12 8V18L2.800 14Z" fill="#fff" stroke="#e8a050" stroke-width=".5"/><path d="M2.800 11L6 10V12zM10.500 7.500V13l-4.500-1V10z" fill="#f8c080" opacity=".8"/></g><g transform="translate(509,45.5)"><path d="M14 5.500L20.700 3.500V18.500L14 21.800Z" fill="url(#gBr)" stroke="#4c70c8" stroke-width=".6"/><path d="M8.500 3.200L15 1L20.700 3.500L14 5.500Z" fill="#cfdcf6" stroke="#5c80d0" stroke-width=".6"/><path d="M0.600 7.500L7 5.500L8.500 6V9.500Z" fill="#cfdcf6" stroke="#5c80d0" stroke-width=".6"/><path d="M0.600 7.500L8.500 9.500V3.200L14 5.500V21.800L0.600 16Z" fill="url(#gOs)" stroke="#c87830" stroke-width=".7"/><path d="M2.800 11L10.500 13V7.500L12 8V18L2.800 14Z" fill="#fff" stroke="#e8a050" stroke-width=".5"/><path d="M2.800 11L6 10V12zM10.500 7.500V13l-4.500-1V10z" fill="#f8c080" opacity=".8"/></g><g transform="translate(539,45.5)"><path d="M1 0.500c3 1.500 7 1.500 10 0v10c-3 1.500-7 1.500-10 0z" fill="url(#gB3)" stroke="#4a62d0" stroke-width=".8"/><path d="M7.500 9c4 2 10 1.500 14.500-1.500v12c-4.500 3-10.500 3.500-14.500 1.500z" fill="url(#gSew)" stroke="#e06810" stroke-width=".8"/><path d="M0.500 13.500l4 2.500-1 1.500 4.500 0.500-1.500-4.500-1 1.300-4-2.800z" fill="#f07818" stroke="#c04808" stroke-width=".5"/></g><g transform="translate(570,45.5)"><path d="M3 9.500c5-4 11-6 17.500-5v9c-3 4-8 7-11 8.500l-6.500-3z" fill="url(#gB2)" stroke="#4a62d0" stroke-width=".8"/><path d="M3 9.500c5-4 11-6 17.500-5-2 2-4 6-4.500 9.500" fill="#c8d6fc" stroke="#4a62d0" stroke-width=".6"/><path d="M0.500 6l9-5.500 12.500 2v12l-9 7.500-12.500-3.500zM0.500 6l12.500 3 9-6.500M13 9v13" fill="none" stroke="#e02828" stroke-width=".9" stroke-dasharray="1.200 1"/></g><g transform="translate(607,45.5)"><path d="M16.400 6.900L22.600 3.600V15L13.500 22.200V14.500C13.500 10.500 14.500 8 16.400 6.900Z" fill="url(#gBv)" stroke="#3c50c8" stroke-width=".8"/><path d="M3.500 3.600L10.600 0.700L22.600 3.600L16.400 6.900Z" fill="#e8eefa" stroke="#3c50c8" stroke-width=".8"/><path d="M0.200 11.700L13.500 14.500V22.200L0.200 19.300Z" fill="url(#gBp)" stroke="#4a62d0" stroke-width=".8"/><path d="M0.200 11.700C0.200 8 1.500 5 3.500 3.600L16.400 6.900C14.500 8 13.500 10.500 13.500 14.500Z" fill="url(#gBl)" stroke="#f06030" stroke-width=".8"/></g><g transform="translate(638,45.5)"><path d="M14.300 1L21.600 6V18.400L14.300 13.600Z" fill="#dce8f8" stroke="#4a72d8" stroke-width=".8"/><path d="M0.200 16.900H9L20.700 22.200H6.800Z" fill="#dce8f8" stroke="#4a72d8" stroke-width=".8"/><path d="M14.300 8.800L21.600 13.100C21.600 17.500 19.500 20.500 15.400 21.700L6.800 17.400C11 16.500 14.300 13.500 14.300 8.800Z" fill="url(#gBl2)" stroke="#f06030" stroke-width=".8"/></g><g transform="translate(668,45.5)"><rect x="0" y="-0.500" width="24" height="23.500" fill="url(#gCy)"/><path d="M0.700 7.900L16.400 15V23H0.700Z" fill="url(#gBp2)"/><path d="M16.400 15L23.600 10.500V23H16.400Z" fill="#a4bcf0"/><path d="M0.700 4.500L9.300 0.700M0.700 4.500V23M16.400 12.200V23" fill="none" stroke="#6474d8" stroke-width=".7"/><path d="M1.200 4.500L9.300 0.700L23.600 7.400L16.900 12.200Z" fill="url(#gBl3)" stroke="#f07038" stroke-width=".7"/><path d="M1.200 4.500L16.900 12.200L23.600 7.400V10.500L16.900 15L1.200 7.900Z" fill="#f8a860" stroke="#f07038" stroke-width=".7"/><path d="M1.200 6.200L16.900 13.600L23.600 9" fill="none" stroke="#5060d0" stroke-width=".6" stroke-dasharray="2 1"/></g><g transform="translate(700,45.5)"><path d="M0.500 14.500l11.500-5 10.500 4-11 6.500z" fill="none" stroke="#4a62d8" stroke-width=".8"/><g transform="translate(6.5,1.5)"><path d="M0 3h6.5v6.5h-6.5z" fill="url(#gB3)"/><path d="M0 3l3-3h6.5l-3 3z" fill="#c8d6fc"/><path d="M6.5 3l3-3v6.5l-3 3z" fill="#6a84e8"/><path d="M0 3h6.5v6.5h-6.5zM0 3l3-3h6.5l-3 3M9.5 0v6.5l-3 3" fill="none" stroke="#4a5ed0" stroke-width=".8"/></g><path d="M7 4.500L0.500 14.500M16 4.500L22.500 13.500M11.500 11V20" fill="none" stroke="#f05030" stroke-width="1.100"/></g><g transform="translate(730,45.5)"><path d="M11.500 1L22.500 10L20 16.500L11.500 21.500L3 16.500L0.500 10Z" fill="url(#gBp)" stroke="#4a62d0" stroke-width=".9"/><path d="M11.500 1L18 4.500L11.500 8L5 4.500Z" fill="#e4ecfc" stroke="#4a62d0" stroke-width=".6"/><path d="M11.500 8V21.500M0.500 10L11.500 14.500L22.500 10M5 4.500L0.500 10M18 4.500L22.500 10M3 16.500L11.500 14.500L20 16.500" fill="none" stroke="#4a62d0" stroke-width=".6"/></g><g transform="translate(784,47.5)"><path d="M-0.400 2.200C7 0.200 14 0.200 21.700 2.200C19.500 7 18 13 17.400 18.900C12 16 6 13.500 1 12.500C1.500 9 1 5.500-0.400 2.200Z" fill="url(#gBs)" stroke="#5a6ee0" stroke-width=".9"/><path d="M5 1.200C6.500 5 7 9.500 6.500 14.200M10.800 0.800C11.800 5.500 12 11 11.800 16.200M16.500 1.200C15.500 6 15 11.500 14.800 17.500" fill="none" stroke="#5a6ee0" stroke-width=".7"/></g><g transform="translate(815,47.5)"><path d="M-0.400 2.200C7 0.200 14 0.200 21.700 2.200C19.500 7 18 13 17.400 18.900C12 16 6 13.500 1 12.500C1.500 9 1 5.500-0.400 2.200Z" fill="url(#gBs)" stroke="#5a6ee0" stroke-width=".9"/><path d="M5 1.200C6.500 5 7 9.500 6.500 14.200M10.800 0.800C11.800 5.500 12 11 11.800 16.200M16.500 1.200C15.500 6 15 11.500 14.800 17.500" fill="none" stroke="#5a6ee0" stroke-width=".7"/><path d="M0.800 5.800C7 4.500 14 4.800 20 6.500M1.200 9.200C7 8.500 13 9.800 18.500 12" fill="none" stroke="#5a6ee0" stroke-width=".7"/></g><g transform="translate(846.5,46.5)"><path d="M0.800 6.500L4.500 1.600C10 1.500 16 2.500 21.300 5.300C18 9 16.500 14 16.300 20.200C11 18 5 16.800 0.800 16.500Z" fill="url(#gS3)" stroke="#5048e8" stroke-width=".9"/><path d="M0.800 6.500C7 6.500 13 8 17.500 11M0.800 12C6 12 11.500 13.500 16.500 16M5.500 6.800V17M11 8V18.500M4.500 1.600L5.500 6.800M11 3L11 8M16.500 4L17.500 11" fill="none" stroke="#6a62ec" stroke-width=".7"/><path d="M4.500 12.500C3 8.500 5 5.500 9 5.500S15 8 14.200 12.500C13.800 14.500 12 15 11 14C10 13 8.500 13 7.500 13.800C6.500 14.500 5 14 4.500 12.500Z" fill="#d8dcec" fill-opacity=".5" stroke="#333" stroke-width="1.100"/></g><g transform="translate(876,45.5)"><path d="M0.500 13.100C4 8 9 3.500 15.300 0.700C18.500 2 21 4 22.200 6.900C17 10 13 15.500 10.400 22.400C8 18 4.500 15 0.500 13.100Z" fill="url(#gG2)" stroke="#b0b0b0" stroke-width=".5"/><path d="M3.500 15C7 9.500 12 5.500 18 3M7 18.500C10 13 14.500 8.500 20.500 5M5 8.500C8.500 10.500 11.500 13.500 13.500 17M10 4C13.500 6 16.500 9 18 12" fill="none" stroke="#a0a0a0" stroke-width=".6"/><path d="M15.300 0.700C18.500 2 21 4 22.200 6.900M0.500 13.100C4.500 15 8 18 10.400 22.400" fill="none" stroke="#f05830" stroke-width="1.300"/><path d="M3.500 5.500L7.500 3L6.800 1.800L10.300 1.500L9 4.800L8.300 3.800L4.300 6.500Z" fill="#f8a030" stroke="#e87018" stroke-width=".5"/><path d="M15.500 19.500L19 15.500L18 14.700L21 13.500L20.800 17L19.800 16.200L16.500 20.300Z" fill="#f8a030" stroke="#e87018" stroke-width=".5"/></g><g transform="translate(908,45.5)"><circle cx="9" cy="4.500" r="4.800" fill="#fff" stroke="#333" stroke-width="1"/><path d="M9 4.500l3-3.500" stroke="#28a040" stroke-width="1.200"/><path d="M11 2a4 4 0 0 1 2 4" stroke="#e03020" stroke-width="1.400" fill="none"/><path d="M1.500 15c3-3 6-3 8.500 1" fill="none" stroke="#e03020" stroke-width="1.100"/><circle cx="1.500" cy="15" r="1.300" fill="#e03020"/><circle cx="5" cy="13" r="1.200" fill="#333"/><path d="M6.500 21l5-3 0.500 3.500z" fill="#28a040"/><path d="M4 19c2 1 4 2 6 1.500" stroke="#28a040" stroke-width="1.500" fill="none"/><path d="M13 13l6-4.500 4 2.500-6 5z" fill="#8aa4f0" stroke="#2a3ea8" stroke-width=".9"/><path d="M13 13l4 3-0.500 2.500-4-3z" fill="#f8c040" stroke="#2a3ea8" stroke-width=".7"/></g><g transform="translate(938.5,45.5)"><path d="M4 4c5-3 10-4 15-3l-5 8c-2 5-5 8-9 10l-3-4c3-3 4-7 2-11z" fill="#eef2f8" stroke="#e05838" stroke-width=".9"/><path d="M19 1l3.500 5c-3 1-6 3-7.500 6l-1-3z" fill="#f8d8c8" stroke="#e05838" stroke-width=".7"/><path d="M1 21c6-1 10-5 12-10s5-7 10-7.500" fill="none" stroke="#3a9aa8" stroke-width="1.100"/><path d="M2 16c5 2 12 0 21-4" fill="none" stroke="#4a62d0" stroke-width="1.100"/><path d="M10 6v13" stroke="#28a8a0" stroke-width=".8"/></g><g transform="translate(1025,45.5)"><path d="M0.200 5.400L10.500 0.200L20.800 4.800L11.700 9.500Z" fill="url(#gPu)" stroke="#b060d8" stroke-width=".6"/><path d="M11.700 9.500L20.800 4.800V16.500L11.700 22Z" fill="#a858d4" stroke="#9848c8" stroke-width=".5"/><path d="M0.200 5.400L11.700 9.500V22L0.200 17.700Z" fill="#c890e4"/><path d="M0.200 5.400L7.100 8.200L7.400 11.100L10.500 14V19.700L7.700 21.400L0.200 17.700Z" fill="url(#gYo)" stroke="#f03838" stroke-width=".9"/><path d="M8.200 7.700L21.400 20.800M20.800 8.200L8.800 20.800" stroke="#505050" stroke-width="2.400"/></g><rect x="154" y="44" width="1" height="27" fill="#cdcdcd"/><rect x="599" y="44" width="1" height="27" fill="#cdcdcd"/><path d="M316.7 54.5h5.600l-2.800 3.200z" fill="#000"/><path d="M359.7 54.5h5.600l-2.800 3.200z" fill="#000"/><path d="M495.2 54.5h5.600l-2.800 3.200z" fill="#000"/><path d="M760.7 61.5h5.600l-2.800 3.200z" fill="#000"/><rect x="771" y="40" width="1" height="33" fill="#e2e2e2"/><rect x="776" y="44" width="2" height="2" fill="#d2d2d2"/><rect x="775" y="43" width="2" height="2" fill="#949494"/><rect x="776" y="48" width="2" height="2" fill="#d2d2d2"/><rect x="775" y="47" width="2" height="2" fill="#949494"/><rect x="776" y="52" width="2" height="2" fill="#d2d2d2"/><rect x="775" y="51" width="2" height="2" fill="#949494"/><rect x="776" y="56" width="2" height="2" fill="#d2d2d2"/><rect x="775" y="55" width="2" height="2" fill="#949494"/><rect x="776" y="60" width="2" height="2" fill="#d2d2d2"/><rect x="775" y="59" width="2" height="2" fill="#949494"/><rect x="776" y="64" width="2" height="2" fill="#d2d2d2"/><rect x="775" y="63" width="2" height="2" fill="#949494"/><rect x="776" y="68" width="2" height="2" fill="#d2d2d2"/><rect x="775" y="67" width="2" height="2" fill="#949494"/><path d="M1001.3 45.3l3 2.6-3 2.600M1005.5 45.3l3 2.600-3 2.600" fill="none" stroke="#000" stroke-width="1.500"/><path d="M1001.7 61.5h5.600l-2.800 3.200z" fill="#000"/><rect x="1012" y="40" width="1" height="33" fill="#e2e2e2"/><rect x="1017" y="44" width="2" height="2" fill="#d2d2d2"/><rect x="1016" y="43" width="2" height="2" fill="#949494"/><rect x="1017" y="48" width="2" height="2" fill="#d2d2d2"/><rect x="1016" y="47" width="2" height="2" fill="#949494"/><rect x="1017" y="52" width="2" height="2" fill="#d2d2d2"/><rect x="1016" y="51" width="2" height="2" fill="#949494"/><rect x="1017" y="56" width="2" height="2" fill="#d2d2d2"/><rect x="1016" y="55" width="2" height="2" fill="#949494"/><rect x="1017" y="60" width="2" height="2" fill="#d2d2d2"/><rect x="1016" y="59" width="2" height="2" fill="#949494"/><rect x="1017" y="64" width="2" height="2" fill="#d2d2d2"/><rect x="1016" y="63" width="2" height="2" fill="#949494"/><rect x="1017" y="68" width="2" height="2" fill="#d2d2d2"/><rect x="1016" y="67" width="2" height="2" fill="#949494"/><g transform="translate(0,81)"><path d="M-8 3.500l8-3.300 10 3.300-8 3.500z" fill="#b8e4c0" stroke="#58786a" stroke-width=".7"/><rect x="-10" y="6" width="20.800" height="14.500" fill="url(#gNew)" stroke="#8088e8" stroke-width="1.300"/><g fill="#7880dc"><rect x="0" y="7.800" width="3" height="2.800"/><rect x="0" y="11.800" width="3" height="2.800"/><rect x="0" y="15.800" width="3" height="2.800"/></g><g fill="#f8f060"><rect x="1" y="8.700" width="1.200" height="1.200"/><rect x="1" y="12.700" width="1.200" height="1.200"/><rect x="1" y="16.700" width="1.200" height="1.200"/></g><path d="M4.500 9.200h4.500M4.500 13.200h4M4.500 17.200h4.500" stroke="#55556a" stroke-width="1"/></g><g transform="translate(26,82)"><path d="M3 15.500L17.500 11.500L19 8L17 14Z" fill="#e4e4e4"/><path d="M0 5.500L15.200 1.700L18 5.200L16.400 10.900L2 14.600Z" fill="url(#gTag)" stroke="#f0a040" stroke-width=".9"/><path d="M2.500 7.300L12.500 4.800M3 9.800L13 7.300M3.500 12.300L13.500 9.800" stroke="#5a5a50" stroke-width=".9"/><circle cx="16" cy="5.500" r="1.100" fill="#e02838"/><path d="M16.500 5.500C19 4.500 21 6 21 9C21 11 20 13 21.500 14.500" fill="none" stroke="#444" stroke-width=".8"/></g><g transform="translate(61,80.5)"><path d="M8 2l7-2 3.500 1.500v9l4.500 1.500v5l-8 3.500-9-3.500v-4l2-1z" fill="#4878e0" stroke="#2448b8" stroke-width=".8"/><path d="M8 2l7-2 3.500 1.500-7 2.500z" fill="#b4ccfa"/><path d="M8 2l3.500 2v10l-3.500-1.500z" fill="#88acf4"/><path d="M11.500 14l7-3.500 4.500 1.500-8 4z" fill="#9ab4f8"/><g transform="translate(0,13)"><path d="M0 3.800l1.500-1.300 2.500 3.200c1.800-3.500 4-6.200 6.800-8.500l0.700 0.800c-3 3.200-5 6.500-6.800 11.200z" fill="#48c448" stroke="#2c9c2c" stroke-width=".5"/><path d="M1.500 4l2.500 3.500" stroke="#a8eca8" stroke-width=".6"/></g></g><g transform="translate(93,80.5)"><path d="M9 2l8-2 5 2.500-3 8 4.500 2-5 4-6-2.500 1.500-4.500-3-1z" fill="#eef2ff" stroke="#3a4ed0" stroke-width="1"/><path d="M3 9.500l19 11-1.500 2-19-10.500z" fill="#f4e080" stroke="#38b8c0" stroke-width=".9"/><path d="M3 11c0-4 3-7 7-8l1.500 2c-3 1-5.500 3.500-6 7z" fill="#333" stroke="#111" stroke-width=".5"/><g transform="translate(0,13)"><path d="M0 3.800l1.500-1.300 2.500 3.200c1.800-3.500 4-6.200 6.800-8.500l0.700 0.800c-3 3.200-5 6.500-6.800 11.200z" fill="#48c448" stroke="#2c9c2c" stroke-width=".5"/><path d="M1.500 4l2.500 3.500" stroke="#a8eca8" stroke-width=".6"/></g></g><g transform="translate(124,80.5)"><path d="M3 4l6-3 5 2v14l-6 3-5-2z" fill="#3a62dc" stroke="#1a3ab0" stroke-width=".8"/><path d="M3 4l6-3 5 2-6 3z" fill="#9ab4f8"/><g transform="translate(9,4)"><path d="M0 3.500l7-3.500 7 2v11l-6 4-8-2.500z" fill="#f8a020" stroke="#c87008" stroke-width=".7"/><path d="M0 3.500l8 2v11.500l-8-2.500z" fill="url(#gY)"/><path d="M0 3.500l7-3.500 7 2-6 3.500z" fill="#ffe880"/></g><g transform="translate(0,13)"><path d="M0 3.800l1.500-1.300 2.500 3.200c1.800-3.500 4-6.200 6.800-8.500l0.700 0.800c-3 3.200-5 6.500-6.800 11.200z" fill="#48c448" stroke="#2c9c2c" stroke-width=".5"/><path d="M1.500 4l2.500 3.500" stroke="#a8eca8" stroke-width=".6"/></g></g><g transform="translate(161,80)"><g transform="translate(1,0)"><path d="M0 3.500l6-3.500 7 2v8l-5.500 3.500-7.500-2.500z" fill="#f8c838" stroke="#b88808" stroke-width=".7"/><path d="M0 3.500l7.500 2v8l-7.500-2.500z" fill="url(#gY)"/><path d="M0 3.500l6-3.500 7 2-5.500 3.500z" fill="#fff0a0"/></g><path d="M13 11l7-7.500 2.500 2.500-7 7.500-3 0.500z" fill="#f0b838" stroke="#a06808" stroke-width=".7"/><path d="M20 3.500l1-1 2.500 2.500-1 1z" fill="#e05050"/><rect x="1.500" y="13.500" width="14" height="8" fill="#fff" stroke="#5a2aa0" stroke-width="1.500"/><text x="8.500" y="20.300" font-size="6.500" font-weight="bold" font-family="Liberation Sans,sans-serif" text-anchor="middle" fill="#222">ABC</text><path d="M18 13l6.500 5-6.500 5z" fill="#c838b8"/></g><g transform="translate(215.5,82)"><path d="M-0.100 7.400H8.200L3.500 16.400H-0.100Z" fill="#ececec"/><path d="M13.500 16.400L17.500 7.400H21.300V16.400Z" fill="#e4e4e4"/><path d="M11.500 2.400H16.900L13.500 16.400H8Z" fill="url(#gG)"/><path d="M3.500 16.400L11.500 2.400L8 16.400Z" fill="#f6f6f6"/><path d="M-0.100 7.400H8.200M17.500 7.400H21.300M-0.100 16.400H3.500L11.500 2.400H16.900L13.500 16.400H21.300M8 16.400L11.500 2.400" fill="none" stroke="#444" stroke-width=".9"/></g><g transform="translate(245.5,81)"><path d="M0.200 6L3.600 17.400C9 21 17 19.500 22.300 15.400V7.400L16.900 3.400H12.300L6.300 13.400Z" fill="#e8e8e8"/><path d="M12.300 4L16.900 3.400L12.900 14.700L8 16.500Z" fill="url(#gG)"/><path d="M16.900 3.400L22.300 7.400V15.400L12.900 14.700Z" fill="#b4b4b4"/><path d="M0.200 6L3.600 17.400C9 21 17 19.500 22.300 15.400M0.200 6L6.300 13.400L12.300 4L16.900 3.400L22.300 7.400M3.600 17.400L8 16.500L12.300 4M8 16.500L12.900 14.700L16.900 3.400M12.900 14.700L22.300 15.400" fill="none" stroke="#444" stroke-width=".8"/></g><g transform="translate(331,81.5)"><rect x="1" y="1.500" width="13" height="17" rx="3" fill="#e8ebfc"/><ellipse cx="7.500" cy="2.60" rx="6.800" ry="1.500" fill="none" stroke="#4c58c4" stroke-width=".9"/><ellipse cx="7.500" cy="4.65" rx="6.800" ry="1.500" fill="none" stroke="#4c58c4" stroke-width=".9"/><ellipse cx="7.500" cy="6.70" rx="6.800" ry="1.500" fill="none" stroke="#4c58c4" stroke-width=".9"/><ellipse cx="7.500" cy="8.75" rx="6.800" ry="1.500" fill="none" stroke="#4c58c4" stroke-width=".9"/><ellipse cx="7.500" cy="10.80" rx="6.800" ry="1.500" fill="none" stroke="#4c58c4" stroke-width=".9"/><ellipse cx="7.500" cy="12.85" rx="6.800" ry="1.500" fill="none" stroke="#4c58c4" stroke-width=".9"/><ellipse cx="7.500" cy="14.90" rx="6.800" ry="1.500" fill="none" stroke="#4c58c4" stroke-width=".9"/><ellipse cx="7.500" cy="16.95" rx="6.800" ry="1.500" fill="none" stroke="#4c58c4" stroke-width=".9"/><ellipse cx="7.500" cy="19.00" rx="6.800" ry="1.500" fill="none" stroke="#4c58c4" stroke-width=".9"/></g><g transform="translate(360.5,80.5)"><path d="M3.500 4.500A2.600 2.600 0 1 1 6.500 2.500" fill="none" stroke="#4048b8" stroke-width="1.100"/><path d="M15.500 16.800A2.600 2.600 0 1 1 13 19.500" fill="none" stroke="#4048b8" stroke-width="1.100"/><path d="M1.500 5.500L6.500 2.500L17 16.500L12.500 19.500Z" fill="#b4bcf0"/><ellipse cx="4.10" cy="4.60" rx="3.300" ry="1.200" transform="rotate(-33 4.10 4.60)" fill="none" stroke="#4048b8" stroke-width="1"/><ellipse cx="5.55" cy="6.50" rx="3.300" ry="1.200" transform="rotate(-33 5.55 6.50)" fill="none" stroke="#4048b8" stroke-width="1"/><ellipse cx="7.00" cy="8.40" rx="3.300" ry="1.200" transform="rotate(-33 7.00 8.40)" fill="none" stroke="#4048b8" stroke-width="1"/><ellipse cx="8.45" cy="10.30" rx="3.300" ry="1.200" transform="rotate(-33 8.45 10.30)" fill="none" stroke="#4048b8" stroke-width="1"/><ellipse cx="9.90" cy="12.20" rx="3.300" ry="1.200" transform="rotate(-33 9.90 12.20)" fill="none" stroke="#4048b8" stroke-width="1"/><ellipse cx="11.35" cy="14.10" rx="3.300" ry="1.200" transform="rotate(-33 11.35 14.10)" fill="none" stroke="#4048b8" stroke-width="1"/><ellipse cx="12.80" cy="16.00" rx="3.300" ry="1.200" transform="rotate(-33 12.80 16.00)" fill="none" stroke="#4048b8" stroke-width="1"/><ellipse cx="14.25" cy="17.90" rx="3.300" ry="1.200" transform="rotate(-33 14.25 17.90)" fill="none" stroke="#4048b8" stroke-width="1"/></g><g transform="translate(391,81.5)"><ellipse cx="12.500" cy="9.700" rx="6.300" ry="10.300" fill="#e4b830" stroke="#c89010" stroke-width=".7"/><path d="M6.500 -0.600H12.500V20H6.500Z" fill="#f0cc40"/><path d="M10 0.200C13 3 13.500 16 10 19.300M12 0.500C15.500 3.500 15.500 16 12 19M14 1.500C17 4.500 17 15 14 18" fill="none" stroke="#5e5e50" stroke-width=".8"/><ellipse cx="6.500" cy="9.700" rx="6.300" ry="10.300" fill="url(#gDisc)" stroke="#e8a020" stroke-width=".8"/><ellipse cx="6.500" cy="9.700" rx="2.200" ry="4.600" fill="#8a7a30" stroke="#5a4c10" stroke-width=".6"/><ellipse cx="7" cy="9.700" rx="1.100" ry="3.200" fill="#d8d0a0"/></g><g transform="translate(426,81)"><ellipse cx="6.800" cy="15.500" rx="3.600" ry="5.800" fill="none" stroke="#747474" stroke-width="1.400" transform="rotate(-27 6.800 15.500)"/><g fill="none" stroke="#5868d8" stroke-width="1.600"><ellipse cx="17.600" cy="8.600" rx="3.600" ry="6.200" transform="rotate(-27 17.600 8.600)"/><ellipse cx="14" cy="10.800" rx="3.600" ry="6.200" transform="rotate(-27 14 10.800)"/><ellipse cx="10.400" cy="13" rx="3.600" ry="6.200" transform="rotate(-27 10.400 13)"/></g><path d="M0.100 -0.100L14.500 11.900M12.200 -0.100L1.300 11.900" stroke="#484848" stroke-width="1.800"/></g><g transform="translate(480,81)"><path d="M10.400 1.700L20.700 18.400H0.400Z" fill="#fff" stroke="#333" stroke-width="1"/></g><g transform="translate(510,81)"><rect x="0.500" y="0.500" width="20" height="17" fill="#fff" stroke="#9090a0" stroke-width=".8"/><rect x="0.500" y="0" width="20" height="2.800" fill="#9466e4"/><path d="M0.500 5.500h20M0.500 8.500h20M0.500 11.500h20M0.500 14.500h20M4.500 3v14.500M8.500 3v14.500M12.500 3v14.500M16.500 3v14.500" stroke="#b0b0bc" stroke-width=".7"/><path d="M15.400 12.400l5.200 8h-10.400z" fill="#fff" stroke="#e02828" stroke-width="1.200"/></g><g transform="translate(540.5,81)"><path d="M0.500 19.500v-15.500l1.500-2.500h6l2 2.500h8v3" fill="#ecd898" stroke="#c8ac58" stroke-width=".8"/><path d="M0.500 19.500l4-12.500h18.500l-4 12.500z" fill="url(#gFold)" stroke="#c8ac58" stroke-width=".8"/><path d="M5.500 8l16-0.200" stroke="#fffbe0" stroke-width=".8"/><g transform="translate(15,7)"><path d="M-3.500 0h7M0 -3.500v7" stroke="#222" stroke-width="1"/><circle r="1.500" fill="#f02020"/></g><g transform="translate(8,14.5)"><path d="M-3.500 0h7M0 -3.500v7" stroke="#222" stroke-width="1"/><circle r="1.500" fill="#f02020"/></g><g transform="translate(18,16.8)"><path d="M-3.500 0h7M0 -3.500v7" stroke="#222" stroke-width="1"/><circle r="1.500" fill="#f02020"/></g></g><g transform="translate(570.5,81)"><path d="M0.500 19.500v-15.500l1.500-2.500h6l2 2.500h8v3" fill="#ecd898" stroke="#c8ac58" stroke-width=".8"/><path d="M0.500 19.500l4-12.500h18.500l-4 12.500z" fill="url(#gFold)" stroke="#c8ac58" stroke-width=".8"/><path d="M5.500 8l16-0.200" stroke="#fffbe0" stroke-width=".8"/><circle cx="15.500" cy="7.500" r="4" fill="#f8f0c8" stroke="#222" stroke-width="1"/><circle cx="8.500" cy="17" r="3.500" fill="#f8f0c8" stroke="#222" stroke-width="1"/><circle cx="18.500" cy="17.500" r="3.800" fill="#fff" stroke="#222" stroke-width="1"/></g><g transform="translate(602.5,81)"><rect x="1.500" y="1.500" width="20.500" height="20" fill="#d0d0d0"/><rect x="0.500" y="0.500" width="20.500" height="20" fill="#efefef" stroke="#3c3c3c" stroke-width="1"/><path d="M3 12.500h11M3 15.500h14M3 18.500h8" stroke="#333" stroke-width="1.100"/></g><g transform="translate(634,80)"><path d="M9 10l7-7.500 3 2.500-6 8z" fill="#d8c078" stroke="#8a7838" stroke-width=".7"/><path d="M16 2.500l3-3c1.500-1 3.500 0.500 2.500 2.500l-2.500 3z" fill="#8a9cf0" stroke="#3a4ec0" stroke-width=".7"/><path d="M5 9l5-1.500 4 4.500-3 3c-2-1-4-3-6-6z" fill="#e8d8a0" stroke="#8a7838" stroke-width=".7"/><path d="M1 15.500v8M21.500 15.500v8M1 19.500h20.500" stroke="#c82020" stroke-width="1.100"/><path d="M1 19.500l4-2v4zM21.500 19.500l-4-2v4z" fill="#c82020"/></g><g transform="translate(670,80)"><path d="M3 3l5-2 3 6-5 3z" fill="#687080" stroke="#303848" stroke-width=".7"/><path d="M21 3l-5-2-3 6 5 3z" fill="#687080" stroke="#303848" stroke-width=".7"/><circle cx="6.500" cy="8" r="3.800" fill="#404858" stroke="#222" stroke-width=".7"/><circle cx="17.500" cy="8" r="3.800" fill="#404858" stroke="#222" stroke-width=".7"/><circle cx="6" cy="7.500" r="1.800" fill="#7a9ad8"/><circle cx="17" cy="7.500" r="1.800" fill="#7a9ad8"/><rect x="10" y="3" width="4" height="4" fill="#3a4a68"/><text x="-1" y="23" font-size="12" font-family="Liberation Sans,sans-serif" fill="#222" letter-spacing="-0.800">10<tspan fill="#b01818">H7</tspan></text></g><g transform="translate(724,80)"><g transform="translate(5,0)"><path d="M0 3.500l6-3.500 7 2v8l-5.500 3.500-7.500-2.500z" fill="#f0c030" stroke="#b88808" stroke-width=".7"/><path d="M0 3.500l7.500 2v8l-7.500-2.500z" fill="url(#gY)"/><path d="M0 3.500l6-3.500 7 2-5.500 3.500z" fill="#fff4b0"/></g><g transform="translate(10,9)"><path d="M0 3.500l6-3.500 7 2v8l-5.500 3.500-7.500-2.500z" fill="#f0c030" stroke="#b88808" stroke-width=".7"/><path d="M0 3.500l7.500 2v8l-7.500-2.500z" fill="url(#gY)"/><path d="M0 3.500l6-3.500 7 2-5.500 3.500z" fill="#fff4b0"/></g><g transform="translate(1,9)"><path d="M2 5v-2.500a3 3 0 0 1 6 0v2.500" fill="none" stroke="#a8a8a8" stroke-width="1.600"/><rect x="0.500" y="5" width="9" height="7" rx="1" fill="#e8c838" stroke="#9a7808" stroke-width=".8"/><path d="M2 7h6M2 9.500h6" stroke="#c8a018" stroke-width=".7"/></g></g><g transform="translate(755,80)"><g transform="translate(5,0)"><path d="M0 3.500l6-3.500 7 2v8l-5.500 3.500-7.500-2.500z" fill="#f0c030" stroke="#b88808" stroke-width=".7"/><path d="M0 3.500l7.500 2v8l-7.500-2.500z" fill="url(#gY)"/><path d="M0 3.500l6-3.500 7 2-5.500 3.500z" fill="#fff4b0"/></g><g transform="translate(10,9)"><path d="M0 3.500l6-3.500 7 2v8l-5.500 3.500-7.500-2.500z" fill="#f0c030" stroke="#b88808" stroke-width=".7"/><path d="M0 3.500l7.500 2v8l-7.500-2.500z" fill="url(#gY)"/><path d="M0 3.500l6-3.500 7 2-5.500 3.500z" fill="#fff4b0"/></g><g transform="translate(3,8)"><path d="M2 5v-2.500a3 3 0 0 1 6 0v2.500" fill="none" stroke="#a8a8a8" stroke-width="1.600"/><rect x="0.500" y="5" width="9" height="7" rx="1" fill="#e8c838" stroke="#9a7808" stroke-width=".8"/><path d="M2 7h6M2 9.500h6" stroke="#c8a018" stroke-width=".7"/></g></g><g transform="translate(810,82)"><path d="M1 16.800L17 1" stroke="#3a3a3a" stroke-width="1"/><circle cx="1" cy="16.8" r="2" fill="#e03426"/><circle cx="17" cy="1" r="2" fill="#e03426"/></g><g transform="translate(840,82)"><path d="M1.300 0.600C10 0 17.500 6 19.500 16.500" fill="none" stroke="#3a3a3a" stroke-width="1.100"/><circle cx="1.3" cy="0.6" r="2" fill="#e03426"/><circle cx="14.3" cy="4.1" r="2" fill="#e03426"/><circle cx="19.5" cy="16.5" r="2" fill="#e03426"/></g><g transform="translate(871,81)"><path d="M5.900 0.400L2.500 9.300M5.900 0.400L9.500 9M13.800 17.800L10.500 10M13.800 17.800L17.500 9.500" fill="none" stroke="#9a9a9a" stroke-width=".8"/><path d="M0.900 9.900L5.900 7.900C9 7.500 10.500 11 13.800 11.800L19.900 7.900" fill="none" stroke="#3a3a3a" stroke-width="1"/><circle cx="5.9" cy="0.4" r="1.8" fill="#8e8e8e"/><circle cx="0.9" cy="9.9" r="1.8" fill="#8e8e8e"/><circle cx="19.9" cy="7.9" r="1.8" fill="#8e8e8e"/><circle cx="13.8" cy="17.8" r="1.8" fill="#8e8e8e"/><circle cx="5.9" cy="7.9" r="2" fill="#e03426"/><circle cx="13.8" cy="11.8" r="2" fill="#e03426"/></g><g transform="translate(902,82)"><path d="M0.500 18.800V6.500L5.600 1.400H13.600V4.500C17.500 4.500 20.100 7.500 20.100 11C20.100 16 16 18.800 13.600 18.800Z" fill="#fff" stroke="#222" stroke-width="1.200"/><path d="M3.400 15.200V8.700C3.400 6.500 5 5 6.800 5C8.800 5 10 6.300 10 8C11 7 12.500 6.800 14 7.200C16 8 16.800 10 16.300 11.500C15.800 13.500 14 15.200 12.900 15.200Z" fill="none" stroke="#e02828" stroke-width="1.200"/></g><g transform="translate(933,81)"><path d="M-0.700 7.500C2 5 5.500 3.500 9.400 3.200C14 5 18.500 7.500 21.700 11.100C18 12.500 14 14.500 10.900 17.700C7 14.500 3 11 -0.700 7.500Z" fill="url(#gSf)" stroke="#8ca0c8" stroke-width=".5"/><path d="M-0.700 7.500C3 11 7 14.500 10.900 17.700" fill="none" stroke="#2838e0" stroke-width="2"/><path d="M7.200 3.900C11.500 6 15.500 9 18.800 12.600" fill="none" stroke="#f07028" stroke-width="1.800"/><path d="M6.500 13.300L12 10.200" stroke="#d02828" stroke-width="1"/><path d="M13.500 9.300l-3.300 0.300 1.500 2.600z" fill="#d02828"/></g><g transform="translate(964,81)"><path d="M5.500 0.300A3.300 3.300 0 1 0 5.500 5.700L7.400 5.300M5.500 13.800A3.300 3.300 0 1 0 5.500 19.200L7.400 19.100" fill="none" stroke="#222" stroke-width="1.200"/><path d="M15.400 2.400C17 0.800 19.500 0.800 21 2.200M15.800 15.500C17.500 14.500 19.500 15 21 16.500" fill="none" stroke="#222" stroke-width="1.200"/><path d="M7.400 5.300V19.100M15.400 1.700V15.500" stroke="#2838e0" stroke-width="1" stroke-dasharray="1 1"/><path d="M7.400 19.100L15.800 15.500" stroke="#e02828" stroke-width="1.300"/><path d="M9.800 6h3v4h1.800l-3.300 3.800-3.300-3.800h1.800z" fill="#f8a848" stroke="#e07820" stroke-width=".6"/></g><g transform="translate(994,81)"><path d="M0.600 10.400C3.500 8 6.500 6.200 10 5.300C14.500 7.500 19 10.500 22.400 14C18.500 15.500 15 17.500 12.200 19.800C8.500 16.500 4.500 13.200 0.600 10.400Z" fill="url(#gSf)" stroke="#8898c0" stroke-width=".7"/><path d="M8.600 9.700C11.500 11 13.800 13.200 15.100 16.200" fill="none" stroke="#f07028" stroke-width="1.800"/><path d="M5 -1.200L19.500 2.400" stroke="#2838e0" stroke-width="1.600"/><path d="M13 1.200V6" stroke="#c82828" stroke-width="1.100"/><path d="M13 8.800l-2.200-3.300h4.400z" fill="#c82828"/></g><g transform="translate(1025,81)"><path d="M0.100 7.500C3 6 6 5 9 4.500L21.800 10.400C18.500 12 15 14 12.400 16.900Z" fill="url(#gSf)" stroke="#8898c0" stroke-width=".7"/><path d="M7.300 -0.500L16 1.700V20.500L7.300 18.400Z" fill="#b8c4e4" fill-opacity=".7" stroke="#7c8cc0" stroke-width=".7"/><path d="M6.600 5.300C10.500 7 13.500 9.500 16 12.600" fill="none" stroke="#f07028" stroke-width="1.800"/><path d="M16 10.400L21.800 10.400L19 12" fill="#dce4f4" stroke="#8898c0" stroke-width=".5"/></g><rect x="18" y="78" width="1" height="27" fill="#cdcdcd"/><rect x="55" y="78" width="1" height="27" fill="#cdcdcd"/><rect x="154" y="78" width="1" height="27" fill="#cdcdcd"/><rect x="418" y="78" width="1" height="27" fill="#cdcdcd"/><rect x="663" y="78" width="1" height="27" fill="#cdcdcd"/><path d="M191.2 95.5h5.600l-2.800 3.200z" fill="#000"/><path d="M303.7 95.5h5.600l-2.800 3.200z" fill="#000"/><path d="M455.2 95.5h5.600l-2.800 3.200z" fill="#000"/><path d="M701.2 95.5h5.600l-2.800 3.200z" fill="#000"/><path d="M784.2 95.5h5.600l-2.800 3.200z" fill="#000"/><rect x="202" y="74" width="1" height="33" fill="#e2e2e2"/><rect x="314" y="74" width="1" height="33" fill="#e2e2e2"/><rect x="466" y="74" width="1" height="33" fill="#e2e2e2"/><rect x="711" y="74" width="1" height="33" fill="#e2e2e2"/><rect x="796" y="74" width="1" height="33" fill="#e2e2e2"/><rect x="207" y="78" width="2" height="2" fill="#d2d2d2"/><rect x="206" y="77" width="2" height="2" fill="#949494"/><rect x="207" y="82" width="2" height="2" fill="#d2d2d2"/><rect x="206" y="81" width="2" height="2" fill="#949494"/><rect x="207" y="86" width="2" height="2" fill="#d2d2d2"/><rect x="206" y="85" width="2" height="2" fill="#949494"/><rect x="207" y="90" width="2" height="2" fill="#d2d2d2"/><rect x="206" y="89" width="2" height="2" fill="#949494"/><rect x="207" y="94" width="2" height="2" fill="#d2d2d2"/><rect x="206" y="93" width="2" height="2" fill="#949494"/><rect x="207" y="98" width="2" height="2" fill="#d2d2d2"/><rect x="206" y="97" width="2" height="2" fill="#949494"/><rect x="207" y="102" width="2" height="2" fill="#d2d2d2"/><rect x="206" y="101" width="2" height="2" fill="#949494"/><rect x="319" y="78" width="2" height="2" fill="#d2d2d2"/><rect x="318" y="77" width="2" height="2" fill="#949494"/><rect x="319" y="82" width="2" height="2" fill="#d2d2d2"/><rect x="318" y="81" width="2" height="2" fill="#949494"/><rect x="319" y="86" width="2" height="2" fill="#d2d2d2"/><rect x="318" y="85" width="2" height="2" fill="#949494"/><rect x="319" y="90" width="2" height="2" fill="#d2d2d2"/><rect x="318" y="89" width="2" height="2" fill="#949494"/><rect x="319" y="94" width="2" height="2" fill="#d2d2d2"/><rect x="318" y="93" width="2" height="2" fill="#949494"/><rect x="319" y="98" width="2" height="2" fill="#d2d2d2"/><rect x="318" y="97" width="2" height="2" fill="#949494"/><rect x="319" y="102" width="2" height="2" fill="#d2d2d2"/><rect x="318" y="101" width="2" height="2" fill="#949494"/><rect x="471" y="78" width="2" height="2" fill="#d2d2d2"/><rect x="470" y="77" width="2" height="2" fill="#949494"/><rect x="471" y="82" width="2" height="2" fill="#d2d2d2"/><rect x="470" y="81" width="2" height="2" fill="#949494"/><rect x="471" y="86" width="2" height="2" fill="#d2d2d2"/><rect x="470" y="85" width="2" height="2" fill="#949494"/><rect x="471" y="90" width="2" height="2" fill="#d2d2d2"/><rect x="470" y="89" width="2" height="2" fill="#949494"/><rect x="471" y="94" width="2" height="2" fill="#d2d2d2"/><rect x="470" y="93" width="2" height="2" fill="#949494"/><rect x="471" y="98" width="2" height="2" fill="#d2d2d2"/><rect x="470" y="97" width="2" height="2" fill="#949494"/><rect x="471" y="102" width="2" height="2" fill="#d2d2d2"/><rect x="470" y="101" width="2" height="2" fill="#949494"/><rect x="716" y="78" width="2" height="2" fill="#d2d2d2"/><rect x="715" y="77" width="2" height="2" fill="#949494"/><rect x="716" y="82" width="2" height="2" fill="#d2d2d2"/><rect x="715" y="81" width="2" height="2" fill="#949494"/><rect x="716" y="86" width="2" height="2" fill="#d2d2d2"/><rect x="715" y="85" width="2" height="2" fill="#949494"/><rect x="716" y="90" width="2" height="2" fill="#d2d2d2"/><rect x="715" y="89" width="2" height="2" fill="#949494"/><rect x="716" y="94" width="2" height="2" fill="#d2d2d2"/><rect x="715" y="93" width="2" height="2" fill="#949494"/><rect x="716" y="98" width="2" height="2" fill="#d2d2d2"/><rect x="715" y="97" width="2" height="2" fill="#949494"/><rect x="716" y="102" width="2" height="2" fill="#d2d2d2"/><rect x="715" y="101" width="2" height="2" fill="#949494"/><rect x="800.5" y="78" width="2" height="2" fill="#d2d2d2"/><rect x="799.5" y="77" width="2" height="2" fill="#949494"/><rect x="800.5" y="82" width="2" height="2" fill="#d2d2d2"/><rect x="799.5" y="81" width="2" height="2" fill="#949494"/><rect x="800.5" y="86" width="2" height="2" fill="#d2d2d2"/><rect x="799.5" y="85" width="2" height="2" fill="#949494"/><rect x="800.5" y="90" width="2" height="2" fill="#d2d2d2"/><rect x="799.5" y="89" width="2" height="2" fill="#949494"/><rect x="800.5" y="94" width="2" height="2" fill="#d2d2d2"/><rect x="799.5" y="93" width="2" height="2" fill="#949494"/><rect x="800.5" y="98" width="2" height="2" fill="#d2d2d2"/><rect x="799.5" y="97" width="2" height="2" fill="#949494"/><rect x="800.5" y="102" width="2" height="2" fill="#d2d2d2"/><rect x="799.5" y="101" width="2" height="2" fill="#949494"/><path d="M303.3 79l3 2.6-3 2.600M307.5 79l3 2.600-3 2.600" fill="none" stroke="#000" stroke-width="1.500"/><rect x="432.5" y="113.500" width="22" height="21" fill="#c8dcd8" stroke="#a4c0bc"/><rect x="455.5" y="113.500" width="22" height="21" fill="#c8dcd8" stroke="#a4c0bc"/><rect x="478.5" y="113.500" width="22" height="21" fill="#c8dcd8" stroke="#a4c0bc"/><rect x="525.0" y="113.500" width="21.5" height="21" fill="#c8dcd8" stroke="#a4c0bc"/><rect x="570.5" y="113.500" width="21.5" height="21" fill="#c8dcd8" stroke="#a4c0bc"/><rect x="616.5" y="113.500" width="22" height="21" fill="#c8dcd8" stroke="#a4c0bc"/><rect x="639.5" y="113.500" width="21.5" height="21" fill="#c8dcd8" stroke="#a4c0bc"/><g transform="translate(207,116)"><g fill="none" stroke="#bababa" stroke-width="1"><path d="M1 5l6-2v11l-6 1.500zM7 3l4 1M1 10l6-1.500"/><path d="M7 0v8M3.500 4h7"/><ellipse cx="12" cy="7.500" rx="3" ry="4"/><ellipse cx="12" cy="7.500" rx="1.300" ry="2"/></g></g><g transform="translate(236,116)"><path d="M1 4c0-3 4-3 6-1l1-2 1 5.500-5-1 1.500-1.500c-1.500-1-3-0.500-3 1z" fill="#bababa"/><path d="M6.500 8h8l-3 3.500v4h-2v-4z" fill="#e8e8e8" stroke="#bababa" stroke-width=".9"/></g><g transform="translate(256,116)"><rect x="0.600" y="0.600" width="15" height="14.500" fill="#fff" stroke="#d02838" stroke-width="1.200"/><circle cx="5.500" cy="5.500" r="2.200" fill="none" stroke="#222" stroke-width=".9"/><path d="M5.500 1.500v8M1.500 5.500h8" stroke="#222" stroke-width=".9"/><path d="M7.500 8h7l-2.500 3v3h-2v-3z" fill="#f8b020" stroke="#c88008" stroke-width=".7"/></g><g transform="translate(291,116)"><path d="M1 6c-1-4 3-6 6-4l1-1.500 0.500 5-4.500-0.500 1.500-1.500c-1.500-1-3.500 0-3 2z" fill="#bababa"/><g fill="none" stroke="#bababa" stroke-width="1"><circle cx="9" cy="10" r="2.500"/><path d="M9 4.500v11M3.500 10h11"/></g></g><g transform="translate(314,116)"><path d="M1 2c2-2 5-2 6 0s3 1 4-0.500l1.500 3c-2 2-4 1-5 0s-3-1-4 0z" fill="#bababa"/><g fill="#eee" stroke="#bababa" stroke-width=".9"><rect x="9.500" y="5.500" width="4" height="3.500"/><rect x="9.500" y="10.500" width="4" height="3.500"/><path d="M7.500 3v9h2M7.500 7.500h2" fill="none"/></g></g><g transform="translate(342,117)"><rect x="1.500" y="1.500" width="13" height="11" fill="none" stroke="#222" stroke-width="1.100" stroke-dasharray="2.500 1.500"/><circle cx="1.500" cy="1.500" r="1.500" fill="#e02828"/><circle cx="14.500" cy="12.500" r="1.500" fill="#e02828"/></g><g transform="translate(383,116)"><path d="M0.500 8c0-3 3-6 7-7l5 1 3.500 3.500v5l-5 3.500-6-1z" fill="url(#gG)" stroke="#555" stroke-width=".9"/><path d="M4.500 5.500c2-1.500 5-1.500 7 0.500v7.500l-1 0.500" fill="none" stroke="#444" stroke-width=".8"/><path d="M5 8l1.500 6M0.500 8l4.500-0.500" stroke="#555" stroke-width=".7"/><path d="M5.500 4l5.500 2.500" stroke="#e02828" stroke-width="1.600"/></g><g transform="translate(406,116)"><path d="M0.500 3.500l7-3 8 2.500v9l-7 3.500-8-3z" fill="#4a8af0" stroke="#2a5ad0" stroke-width=".7"/><path d="M0.500 3.500l8 2.500v9.500l-8-3z" fill="#8ac0f8"/><path d="M0.500 3.500l7-3 8 2.500-7 3z" fill="#c8e4fc"/><path d="M8.500 6l7-3v9l-7 3.500z" fill="#2a6ae0"/><path d="M5 1.500v8.500l-4.500 2.500M5 10l10.500 2" fill="none" stroke="#e04848" stroke-width=".7"/></g><g transform="translate(435,116.5)"><path d="M0 0l4.500 3-4.500 3z" fill="#28a838"/><path d="M0 9l4.500 3-4.500 3z" fill="#e02828"/><g fill="#fff" stroke="#222" stroke-width=".9"><circle cx="11" cy="2.500" r="2"/><circle cx="6.500" cy="7.500" r="2"/><circle cx="15.500" cy="7.500" r="2"/><circle cx="11" cy="12.500" r="2"/></g><path d="M8 4.500l6 6M14 4.500l-6 6" stroke="#222" stroke-width=".8"/><circle cx="11" cy="7.500" r="2.200" fill="#f8e020" stroke="#a88808" stroke-width=".7"/></g><g transform="translate(460,117)"><path d="M1 12l11-10.500" stroke="#222" stroke-width="1.200"/><circle cx="12" cy="1.5" r="1.7" fill="#e03426"/></g><g transform="translate(482.5,117)"><path d="M1 13l12-12" stroke="#222" stroke-width="1.200"/><circle cx="7" cy="7" r="1.7" fill="#e03426"/></g><g transform="translate(505,116)"><path d="M0.500 1c5 0 6 2 6 7s1.500 7 7 7" fill="none" stroke="#222" stroke-width="1.200"/><circle cx="6.5" cy="8" r="1.7" fill="#e03426"/></g><g transform="translate(528,117)"><path d="M1 8l5-7 4 11 5-7" fill="none" stroke="#9838c8" stroke-width="1.100"/><path d="M1 8c2-5 4-8 5-7s3 12 4 11 3-5 5-7" fill="none" stroke="#222" stroke-width=".8" opacity="0"/><circle cx="1.5" cy="8" r="1.6" fill="#e03426"/><circle cx="6" cy="1.5" r="1.6" fill="#e03426"/><circle cx="10" cy="12" r="1.6" fill="#e03426"/><circle cx="15" cy="5.5" r="1.6" fill="#e03426"/></g><g transform="translate(551,117)"><path d="M0.500 9c3-5 11-5 14 0" fill="none" stroke="#222" stroke-width="1.100"/><path d="M7.500 0v14" stroke="#222" stroke-width="1.100"/><circle cx="7.5" cy="5.3" r="1.6" fill="#e03426"/></g><g transform="translate(573.3,116)"><circle cx="8" cy="8" r="7.300" fill="none" stroke="#222" stroke-width="1.200"/><circle cx="8" cy="8" r="1.8" fill="#e03426"/></g><g transform="translate(597.3,116.5)"><circle cx="7.500" cy="7.500" r="6.300" fill="none" stroke="#222" stroke-width="1.100"/><circle cx="7.5" cy="1.2" r="1.5" fill="#e03426"/><circle cx="7.5" cy="13.8" r="1.5" fill="#e03426"/><circle cx="1.2" cy="7.5" r="1.5" fill="#e03426"/><circle cx="13.8" cy="7.5" r="1.5" fill="#e03426"/></g><g transform="translate(620.5,117)"><path d="M7 0.500v13M0.500 7h13" stroke="#222" stroke-width="1.300"/><circle cx="7" cy="7" r="1.6" fill="#e03426"/></g><g transform="translate(643,117)"><path d="M1 13l12-12" stroke="#222" stroke-width="1.200"/><circle cx="3.5" cy="10.5" r="1.7" fill="#e03426"/></g><g transform="translate(665.5,116)"><path d="M0.500 4c4-4 10-4 15-1-3 3-4 7-3 12-3-3-8-5-12-5z" fill="#6aa0f0" stroke="#3a6ad0" stroke-width=".7"/><path d="M12.500 15c-1-5 0-9 3-12" fill="none" stroke="#c8c8c8" stroke-width="1.500"/><path d="M1 4.500c4-3 9-3 13-1-2 2-3 5-3 8-3-2-6-3-10-3z" fill="#a8d0fc"/><circle cx="9.5" cy="5" r="1.5" fill="#e03426"/></g><g transform="translate(696,117)"><path d="M0.500 0.500l11 3v11l-11-3.500zM4 1.500v11M8 2.500v11M0.500 4l11 3.500M0.500 7.500l11 3.500" fill="none" stroke="#333" stroke-width="1"/><circle cx="7" cy="5.5" r="1.5" fill="#e03426"/></g><rect x="229" y="111" width="1" height="26" fill="#cdcdcd"/><rect x="335" y="111" width="1" height="26" fill="#cdcdcd"/><rect x="376" y="111" width="1" height="26" fill="#cdcdcd"/><rect x="428" y="111" width="1" height="26" fill="#cdcdcd"/><rect x="687" y="111" width="1" height="26" fill="#cdcdcd"/><path d="M279.2 122.0h5.600l-2.800 3.200z" fill="#000"/><path d="M365.2 122.0h5.600l-2.800 3.200z" fill="#000"/>
</svg>
<div class="abs combo" style="left:-2px;top:114px;width:53px"></div>
<div class="abs combo" style="left:60px;top:114px;width:138px"><span>整个装配</span></div>
<div class="abs combo" style="left:356px;top:13px;width:123px;border-color:#8a8a8a"><span style="left:1px">查找命令</span></div>
<svg width="1048" height="140" viewBox="0 0 1048 140"><path d="M40 123h8l-4 4.300z" fill="#000"/><path d="M186.500 123h8l-4 4.300z" fill="#000"/><g transform="translate(463,14.5)"><circle cx="9.500" cy="6" r="4.600" fill="#fff" stroke="#555" stroke-width="1.200"/><circle cx="9.500" cy="6" r="2.600" fill="none" stroke="#bbb" stroke-width=".8"/><path d="M6 9.500l-5 5 1.500 1.500 5-5" fill="#ddd" stroke="#555" stroke-width=".9"/></g></svg>
<div id="left" class="abs">
<span class="abs" style="left:-41px;top:7px;font-size:12px;line-height:16px;white-space:nowrap">装配导航器</span><div class="abs" style="left:82px;top:10px;width:10px;height:8px;border:1px solid #111;border-top-width:2px"></div><div class="abs" style="left:0;top:29px;width:100px;height:21px;background:#f0f0f0;border:1px solid #e2e2e2;border-left:0;box-sizing:border-box"></div><span class="abs" style="left:-39px;top:33px;font-size:12px;line-height:16px;white-space:nowrap">描述性部件名</span><svg width="110" height="528"><path d="M50.500 43.500h10l-5-5.500z" fill="#111"/></svg><div class="row" style="top:50px;height:20px"><span style="left:-7px">截面</span></div><div class="row alt" style="top:70px;height:20px"><span style="left:9px;font-weight:bold;word-spacing:6px">装配 (顺序:</span></div><div class="row" style="top:90px;height:20px"><span style="left:12px">约束</span></div><div class="row alt" style="top:110px;height:20px"><span style="left:28px">底座</span></div><div class="row" style="top:130px;height:20px"><span style="left:28px">尾接杆</span></div><div class="row alt" style="top:150px;height:20px"><span style="left:28px">钻套安装板</span></div><div class="row" style="top:170px;height:20px"><span style="left:28px">导套-</span></div><div class="row alt" style="top:190px;height:20px"><span style="left:28px">衬套-</span></div><div class="row" style="top:210px;height:20px"><span style="left:28px">钻模</span></div><div class="row alt" style="top:230px;height:20px"><span style="left:28px">钻套衬套</span></div><div class="row" style="top:250px;height:20px"><span style="left:28px">圆销</span></div><div class="row alt" style="top:270px;height:20px"><span style="left:28px">钻套螺钉</span></div><div class="row" style="top:290px;height:20px"><span style="left:28px">V型块 x 2</span></div><div class="row alt" style="top:310px;height:20px"><span style="left:28px">旋转座 x 2</span></div><div class="row" style="top:330px;height:20px"><span style="left:28px">螺杆 x 2</span></div><div class="row alt" style="top:350px;height:20px"><span style="left:28px">螺杆-2 x 2</span></div><div class="row" style="top:370px;height:20px"><span style="left:28px">V型压块 x 2</span></div><div class="row alt" style="top:390px;height:20px"><span style="left:28px">压板 x 2</span></div><div class="row" style="top:410px;height:20px"><span style="left:28px">M12X45 x 2</span></div><div class="row alt" style="top:430px;height:20px"><span style="left:28px">M10螺母</span></div><div class="row" style="top:450px;height:20px"><span style="left:28px">M12螺母</span></div><div class="row alt" style="top:470px;height:20px"><span style="left:28px">转销 x 6</span></div><div class="row" style="top:490px;height:8px"><span style="left:28px">M6X45</span></div><svg width="82" height="498" style="width:82px;height:498px;overflow:hidden"><g transform="translate(-8,79)"><path d="M0.500 4l5.500-3.500 7 2v4l-5 3-7.500-2.500z" fill="#d89818" stroke="#7a5808" stroke-width=".8"/><path d="M0.500 4l5.500-3.500 7 2-5 3.500z" fill="#f8d860"/><path d="M8 6l5-3.500v4l-5 3z" fill="#a87008"/></g><rect x="80.500" y="75" width="2" height="11" fill="#f0a040"/><g transform="translate(0,94)"><path d="M5.500 0v8l-5.500-4z" fill="#2030d0"/><path d="M1.500 7l6 7.500h-6z" fill="#d81828"/><path d="M-1 2h2M-1 5.500h2M-1 9h2M-1 12h2" stroke="#111" stroke-width="1.500"/></g><g transform="translate(0,115)"><rect x="-4.500" y="0.500" width="11" height="10" fill="#fff" stroke="#111" stroke-width="1.300"/><path d="M-4 8C-2 9 -1 9.500 0 9.500C1.500 6 3.500 3.500 6.500 1" fill="none" stroke="#e81c24" stroke-width="2.300"/></g><g transform="translate(10.5,114.5)"><path d="M0.500 4l5.500-3.500 7 2v8l-5 3-7.500-2.500z" fill="#f4c020" stroke="#a87808" stroke-width=".8"/><path d="M0.500 4l7.500 2v7.500l-7.500-2.500z" fill="#fff6a0"/><path d="M0.500 4l5.500-3.500 7 2-5 3.500z" fill="#ffe870"/><path d="M8 6l5-3.500v8l-5 3z" fill="#d89a10"/><path d="M0.500 4l7.500 2 5-3.500M8 6v7.500" fill="none" stroke="#a87808" stroke-width=".6"/></g><g transform="translate(0,135)"><rect x="-4.500" y="0.500" width="11" height="10" fill="#fff" stroke="#111" stroke-width="1.300"/><path d="M-4 8C-2 9 -1 9.500 0 9.500C1.500 6 3.500 3.500 6.500 1" fill="none" stroke="#e81c24" stroke-width="2.300"/></g><g transform="translate(10.5,134.5)"><path d="M0.500 4l5.500-3.500 7 2v8l-5 3-7.500-2.500z" fill="#f4c020" stroke="#a87808" stroke-width=".8"/><path d="M0.500 4l7.500 2v7.500l-7.500-2.500z" fill="#fff6a0"/><path d="M0.500 4l5.500-3.500 7 2-5 3.500z" fill="#ffe870"/><path d="M8 6l5-3.500v8l-5 3z" fill="#d89a10"/><path d="M0.500 4l7.500 2 5-3.500M8 6v7.500" fill="none" stroke="#a87808" stroke-width=".6"/></g><g transform="translate(0,155)"><rect x="-4.500" y="0.500" width="11" height="10" fill="#fff" stroke="#111" stroke-width="1.300"/><path d="M-4 8C-2 9 -1 9.500 0 9.500C1.500 6 3.500 3.500 6.500 1" fill="none" stroke="#e81c24" stroke-width="2.300"/></g><g transform="translate(10.5,154.5)"><path d="M0.500 4l5.500-3.500 7 2v8l-5 3-7.500-2.500z" fill="#f4c020" stroke="#a87808" stroke-width=".8"/><path d="M0.500 4l7.500 2v7.500l-7.500-2.500z" fill="#fff6a0"/><path d="M0.500 4l5.500-3.500 7 2-5 3.500z" fill="#ffe870"/><path d="M8 6l5-3.500v8l-5 3z" fill="#d89a10"/><path d="M0.500 4l7.500 2 5-3.500M8 6v7.500" fill="none" stroke="#a87808" stroke-width=".6"/></g><g transform="translate(0,175)"><rect x="-4.500" y="0.500" width="11" height="10" fill="#fff" stroke="#111" stroke-width="1.300"/><path d="M-4 8C-2 9 -1 9.500 0 9.500C1.500 6 3.500 3.500 6.500 1" fill="none" stroke="#e81c24" stroke-width="2.300"/></g><g transform="translate(10.5,174.5)"><path d="M0.500 4l5.500-3.500 7 2v8l-5 3-7.500-2.500z" fill="#f4c020" stroke="#a87808" stroke-width=".8"/><path d="M0.500 4l7.500 2v7.500l-7.500-2.500z" fill="#fff6a0"/><path d="M0.500 4l5.500-3.500 7 2-5 3.500z" fill="#ffe870"/><path d="M8 6l5-3.500v8l-5 3z" fill="#d89a10"/><path d="M0.500 4l7.500 2 5-3.500M8 6v7.500" fill="none" stroke="#a87808" stroke-width=".6"/></g><g transform="translate(0,195)"><rect x="-4.500" y="0.500" width="11" height="10" fill="#fff" stroke="#111" stroke-width="1.300"/><path d="M-4 8C-2 9 -1 9.500 0 9.500C1.500 6 3.500 3.500 6.500 1" fill="none" stroke="#e81c24" stroke-width="2.300"/></g><g transform="translate(10.5,194.5)"><path d="M0.500 4l5.500-3.500 7 2v8l-5 3-7.500-2.500z" fill="#f4c020" stroke="#a87808" stroke-width=".8"/><path d="M0.500 4l7.500 2v7.500l-7.500-2.500z" fill="#fff6a0"/><path d="M0.500 4l5.500-3.500 7 2-5 3.500z" fill="#ffe870"/><path d="M8 6l5-3.500v8l-5 3z" fill="#d89a10"/><path d="M0.500 4l7.500 2 5-3.500M8 6v7.500" fill="none" stroke="#a87808" stroke-width=".6"/></g><g transform="translate(0,215)"><rect x="-4.500" y="0.500" width="11" height="10" fill="#fff" stroke="#111" stroke-width="1.300"/><path d="M-4 8C-2 9 -1 9.500 0 9.500C1.500 6 3.500 3.500 6.500 1" fill="none" stroke="#e81c24" stroke-width="2.300"/></g><g transform="translate(10.5,214.5)"><path d="M0.500 4l5.500-3.500 7 2v8l-5 3-7.500-2.500z" fill="#f4c020" stroke="#a87808" stroke-width=".8"/><path d="M0.500 4l7.500 2v7.500l-7.500-2.500z" fill="#fff6a0"/><path d="M0.500 4l5.500-3.500 7 2-5 3.500z" fill="#ffe870"/><path d="M8 6l5-3.500v8l-5 3z" fill="#d89a10"/><path d="M0.500 4l7.500 2 5-3.500M8 6v7.500" fill="none" stroke="#a87808" stroke-width=".6"/></g><g transform="translate(0,235)"><rect x="-4.500" y="0.500" width="11" height="10" fill="#fff" stroke="#111" stroke-width="1.300"/><path d="M-4 8C-2 9 -1 9.500 0 9.500C1.500 6 3.500 3.500 6.500 1" fill="none" stroke="#e81c24" stroke-width="2.300"/></g><g transform="translate(10.5,234.5)"><path d="M0.500 4l5.500-3.500 7 2v8l-5 3-7.500-2.500z" fill="#f4c020" stroke="#a87808" stroke-width=".8"/><path d="M0.500 4l7.500 2v7.500l-7.500-2.500z" fill="#fff6a0"/><path d="M0.500 4l5.500-3.500 7 2-5 3.500z" fill="#ffe870"/><path d="M8 6l5-3.500v8l-5 3z" fill="#d89a10"/><path d="M0.500 4l7.500 2 5-3.500M8 6v7.500" fill="none" stroke="#a87808" stroke-width=".6"/></g><g transform="translate(0,255)"><rect x="-4.500" y="0.500" width="11" height="10" fill="#fff" stroke="#111" stroke-width="1.300"/><path d="M-4 8C-2 9 -1 9.500 0 9.500C1.500 6 3.500 3.500 6.500 1" fill="none" stroke="#e81c24" stroke-width="2.300"/></g><g transform="translate(10.5,254.5)"><path d="M0.500 4l5.500-3.500 7 2v8l-5 3-7.500-2.500z" fill="#f4c020" stroke="#a87808" stroke-width=".8"/><path d="M0.500 4l7.500 2v7.500l-7.500-2.500z" fill="#fff6a0"/><path d="M0.500 4l5.500-3.500 7 2-5 3.500z" fill="#ffe870"/><path d="M8 6l5-3.500v8l-5 3z" fill="#d89a10"/><path d="M0.500 4l7.500 2 5-3.500M8 6v7.500" fill="none" stroke="#a87808" stroke-width=".6"/></g><g transform="translate(0,275)"><rect x="-4.500" y="0.500" width="11" height="10" fill="#fff" stroke="#111" stroke-width="1.300"/><path d="M-4 8C-2 9 -1 9.500 0 9.500C1.500 6 3.500 3.500 6.500 1" fill="none" stroke="#e81c24" stroke-width="2.300"/></g><g transform="translate(10.5,274.5)"><path d="M0.500 4l5.500-3.500 7 2v8l-5 3-7.500-2.500z" fill="#f4c020" stroke="#a87808" stroke-width=".8"/><path d="M0.500 4l7.500 2v7.500l-7.500-2.500z" fill="#fff6a0"/><path d="M0.500 4l5.500-3.500 7 2-5 3.500z" fill="#ffe870"/><path d="M8 6l5-3.500v8l-5 3z" fill="#d89a10"/><path d="M0.500 4l7.500 2 5-3.500M8 6v7.500" fill="none" stroke="#a87808" stroke-width=".6"/></g><g transform="translate(0,295)"><rect x="-4.500" y="0.500" width="11" height="10" fill="#fff" stroke="#111" stroke-width="1.300"/><path d="M-4 8C-2 9 -1 9.500 0 9.500C1.500 6 3.500 3.500 6.500 1" fill="none" stroke="#e81c24" stroke-width="2.300"/></g><g transform="translate(10.5,294.5)"><path d="M0.500 4l5.500-3.500 7 2v8l-5 3-7.500-2.500z" fill="#f4c020" stroke="#a87808" stroke-width=".8"/><path d="M0.500 4l7.500 2v7.500l-7.500-2.500z" fill="#fff6a0"/><path d="M0.500 4l5.500-3.500 7 2-5 3.500z" fill="#ffe870"/><path d="M8 6l5-3.500v8l-5 3z" fill="#d89a10"/><path d="M0.500 4l7.500 2 5-3.500M8 6v7.500" fill="none" stroke="#a87808" stroke-width=".6"/></g><g transform="translate(0,315)"><rect x="-4.500" y="0.500" width="11" height="10" fill="#fff" stroke="#111" stroke-width="1.300"/><path d="M-4 8C-2 9 -1 9.500 0 9.500C1.500 6 3.500 3.500 6.500 1" fill="none" stroke="#e81c24" stroke-width="2.300"/></g><g transform="translate(10.5,314.5)"><path d="M0.500 4l5.500-3.500 7 2v8l-5 3-7.500-2.500z" fill="#f4c020" stroke="#a87808" stroke-width=".8"/><path d="M0.500 4l7.500 2v7.500l-7.500-2.500z" fill="#fff6a0"/><path d="M0.500 4l5.500-3.500 7 2-5 3.500z" fill="#ffe870"/><path d="M8 6l5-3.500v8l-5 3z" fill="#d89a10"/><path d="M0.500 4l7.500 2 5-3.500M8 6v7.500" fill="none" stroke="#a87808" stroke-width=".6"/></g><g transform="translate(0,335)"><rect x="-4.500" y="0.500" width="11" height="10" fill="#fff" stroke="#111" stroke-width="1.300"/><path d="M-4 8C-2 9 -1 9.500 0 9.500C1.500 6 3.500 3.500 6.500 1" fill="none" stroke="#e81c24" stroke-width="2.300"/></g><g transform="translate(10.5,334.5)"><path d="M0.500 4l5.500-3.500 7 2v8l-5 3-7.500-2.500z" fill="#f4c020" stroke="#a87808" stroke-width=".8"/><path d="M0.500 4l7.500 2v7.500l-7.500-2.500z" fill="#fff6a0"/><path d="M0.500 4l5.500-3.500 7 2-5 3.500z" fill="#ffe870"/><path d="M8 6l5-3.500v8l-5 3z" fill="#d89a10"/><path d="M0.500 4l7.500 2 5-3.500M8 6v7.500" fill="none" stroke="#a87808" stroke-width=".6"/></g><g transform="translate(0,355)"><rect x="-4.500" y="0.500" width="11" height="10" fill="#fff" stroke="#111" stroke-width="1.300"/><path d="M-4 8C-2 9 -1 9.500 0 9.500C1.500 6 3.500 3.500 6.500 1" fill="none" stroke="#e81c24" stroke-width="2.300"/></g><g transform="translate(10.5,354.5)"><path d="M0.500 4l5.500-3.500 7 2v8l-5 3-7.500-2.500z" fill="#f4c020" stroke="#a87808" stroke-width=".8"/><path d="M0.500 4l7.500 2v7.500l-7.500-2.500z" fill="#fff6a0"/><path d="M0.500 4l5.500-3.500 7 2-5 3.500z" fill="#ffe870"/><path d="M8 6l5-3.500v8l-5 3z" fill="#d89a10"/><path d="M0.500 4l7.500 2 5-3.500M8 6v7.500" fill="none" stroke="#a87808" stroke-width=".6"/></g><g transform="translate(0,375)"><rect x="-4.500" y="0.500" width="11" height="10" fill="#fff" stroke="#111" stroke-width="1.300"/><path d="M-4 8C-2 9 -1 9.500 0 9.500C1.500 6 3.500 3.500 6.500 1" fill="none" stroke="#e81c24" stroke-width="2.300"/></g><g transform="translate(10.5,374.5)"><path d="M0.500 4l5.500-3.500 7 2v8l-5 3-7.500-2.500z" fill="#f4c020" stroke="#a87808" stroke-width=".8"/><path d="M0.500 4l7.500 2v7.500l-7.500-2.500z" fill="#fff6a0"/><path d="M0.500 4l5.500-3.500 7 2-5 3.500z" fill="#ffe870"/><path d="M8 6l5-3.500v8l-5 3z" fill="#d89a10"/><path d="M0.500 4l7.500 2 5-3.500M8 6v7.500" fill="none" stroke="#a87808" stroke-width=".6"/></g><g transform="translate(0,395)"><rect x="-4.500" y="0.500" width="11" height="10" fill="#fff" stroke="#111" stroke-width="1.300"/><path d="M-4 8C-2 9 -1 9.500 0 9.500C1.500 6 3.500 3.500 6.500 1" fill="none" stroke="#e81c24" stroke-width="2.300"/></g><g transform="translate(10.5,394.5)"><path d="M0.500 4l5.500-3.500 7 2v8l-5 3-7.500-2.500z" fill="#f4c020" stroke="#a87808" stroke-width=".8"/><path d="M0.500 4l7.500 2v7.500l-7.500-2.500z" fill="#fff6a0"/><path d="M0.500 4l5.500-3.500 7 2-5 3.500z" fill="#ffe870"/><path d="M8 6l5-3.500v8l-5 3z" fill="#d89a10"/><path d="M0.500 4l7.500 2 5-3.500M8 6v7.500" fill="none" stroke="#a87808" stroke-width=".6"/></g><g transform="translate(0,415)"><rect x="-4.500" y="0.500" width="11" height="10" fill="#fff" stroke="#111" stroke-width="1.300"/><path d="M-4 8C-2 9 -1 9.500 0 9.500C1.500 6 3.500 3.500 6.500 1" fill="none" stroke="#e81c24" stroke-width="2.300"/></g><g transform="translate(10.5,414.5)"><path d="M0.500 4l5.500-3.500 7 2v8l-5 3-7.500-2.500z" fill="#f4c020" stroke="#a87808" stroke-width=".8"/><path d="M0.500 4l7.500 2v7.500l-7.500-2.500z" fill="#fff6a0"/><path d="M0.500 4l5.500-3.500 7 2-5 3.500z" fill="#ffe870"/><path d="M8 6l5-3.500v8l-5 3z" fill="#d89a10"/><path d="M0.500 4l7.500 2 5-3.500M8 6v7.500" fill="none" stroke="#a87808" stroke-width=".6"/></g><g transform="translate(0,435)"><rect x="-4.500" y="0.500" width="11" height="10" fill="#fff" stroke="#111" stroke-width="1.300"/><path d="M-4 8C-2 9 -1 9.500 0 9.500C1.500 6 3.500 3.500 6.500 1" fill="none" stroke="#e81c24" stroke-width="2.300"/></g><g transform="translate(10.5,434.5)"><path d="M0.500 4l5.500-3.500 7 2v8l-5 3-7.500-2.500z" fill="#f4c020" stroke="#a87808" stroke-width=".8"/><path d="M0.500 4l7.500 2v7.500l-7.500-2.500z" fill="#fff6a0"/><path d="M0.500 4l5.500-3.500 7 2-5 3.500z" fill="#ffe870"/><path d="M8 6l5-3.500v8l-5 3z" fill="#d89a10"/><path d="M0.500 4l7.500 2 5-3.500M8 6v7.500" fill="none" stroke="#a87808" stroke-width=".6"/></g><g transform="translate(0,455)"><rect x="-4.500" y="0.500" width="11" height="10" fill="#fff" stroke="#111" stroke-width="1.300"/><path d="M-4 8C-2 9 -1 9.500 0 9.500C1.500 6 3.500 3.500 6.500 1" fill="none" stroke="#e81c24" stroke-width="2.300"/></g><g transform="translate(10.5,454.5)"><path d="M0.500 4l5.500-3.500 7 2v8l-5 3-7.500-2.500z" fill="#f4c020" stroke="#a87808" stroke-width=".8"/><path d="M0.500 4l7.500 2v7.500l-7.500-2.500z" fill="#fff6a0"/><path d="M0.500 4l5.500-3.500 7 2-5 3.500z" fill="#ffe870"/><path d="M8 6l5-3.500v8l-5 3z" fill="#d89a10"/><path d="M0.500 4l7.500 2 5-3.500M8 6v7.500" fill="none" stroke="#a87808" stroke-width=".6"/></g><g transform="translate(0,475)"><rect x="-4.500" y="0.500" width="11" height="10" fill="#fff" stroke="#111" stroke-width="1.300"/><path d="M-4 8C-2 9 -1 9.500 0 9.500C1.500 6 3.500 3.500 6.500 1" fill="none" stroke="#e81c24" stroke-width="2.300"/></g><g transform="translate(10.5,474.5)"><path d="M0.500 4l5.500-3.500 7 2v8l-5 3-7.500-2.500z" fill="#f4c020" stroke="#a87808" stroke-width=".8"/><path d="M0.500 4l7.500 2v7.500l-7.500-2.500z" fill="#fff6a0"/><path d="M0.500 4l5.500-3.500 7 2-5 3.500z" fill="#ffe870"/><path d="M8 6l5-3.500v8l-5 3z" fill="#d89a10"/><path d="M0.500 4l7.500 2 5-3.500M8 6v7.500" fill="none" stroke="#a87808" stroke-width=".6"/></g><g transform="translate(0,495)"><rect x="-4.500" y="0.500" width="11" height="10" fill="#fff" stroke="#111" stroke-width="1.300"/><path d="M-4 8C-2 9 -1 9.500 0 9.500C1.500 6 3.500 3.500 6.500 1" fill="none" stroke="#e81c24" stroke-width="2.300"/></g><g transform="translate(10.5,494.5)"><path d="M0.500 4l5.500-3.500 7 2v8l-5 3-7.500-2.500z" fill="#f4c020" stroke="#a87808" stroke-width=".8"/><path d="M0.500 4l7.500 2v7.500l-7.500-2.500z" fill="#fff6a0"/><path d="M0.500 4l5.500-3.500 7 2-5 3.500z" fill="#ffe870"/><path d="M8 6l5-3.500v8l-5 3z" fill="#d89a10"/><path d="M0.500 4l7.500 2 5-3.500M8 6v7.500" fill="none" stroke="#a87808" stroke-width=".6"/></g></svg><div class="abs" style="left:82px;top:50px;width:17px;height:448px;background:#f0f0f0"></div><div class="abs" style="left:84px;top:68px;width:14px;height:362px;background:#cdcdcd"></div><div class="abs" style="left:0;top:498px;width:99px;height:17px;background:#f0f0f0"></div><svg width="110" height="528"><path d="M87 62.500l3.500-3.500 3.500 3.500" fill="none" stroke="#555" stroke-width="1.800"/><path d="M87 487.500l3.500 3.500 3.500-3.500" fill="none" stroke="#555" stroke-width="1.800"/><path d="M71.500 502.500l3.500 3.500-3.500 3.500" fill="none" stroke="#555" stroke-width="1.800"/></svg><div class="abs" style="left:-1px;top:517px;width:100px;height:3px;background:#d4d4d4;border:1px solid #b0b0b0"></div>
</div>
<div id="view" class="abs"></div>
<svg id="model" width="1048" height="710" viewBox="0 0 1048 710">
<rect x="359" y="463.500" width="35.500" height="19.500" fill="#c87a00" stroke="#3a2a10" stroke-width=".7"/><rect x="359" y="463.500" width="30.500" height="3" fill="#ffc21a" stroke="#3a2a10" stroke-width=".4"/><path d="M374.800 463.500v3" stroke="#3a2a10" stroke-width=".5"/><rect x="677" y="463.500" width="36.800" height="19.500" fill="#f29200" stroke="#3a2a10" stroke-width=".7"/><rect x="683" y="463.500" width="30.800" height="3" fill="#ffc21a" stroke="#3a2a10" stroke-width=".4"/><path d="M698 463.500v3" stroke="#3a2a10" stroke-width=".5"/><rect x="430.300" y="358.800" width="17" height="46" fill="url(#gCyl)" stroke="#555" stroke-width=".5"/><rect x="446.600" y="353" width="6.200" height="56.300" fill="url(#gCyl)" stroke="#444" stroke-width=".5"/><path d="M452.800 357c1 6 3 8 5.700 8.400H572l10.500 6v19l-10.500 6.800H458.500c-2.700 0.400-4.700 3-5.700 8z" fill="url(#gCyl2)" stroke="#555" stroke-width=".5"/><path d="M572 365.400v31.800" stroke="#444" stroke-width=".6"/><rect x="576.200" y="374.600" width="6" height="13.400" rx="2" fill="#c4c4c4" stroke="#2a2a2a" stroke-width=".8"/><path d="M421.300 428.500V395.200h9v19.800h9.300v13.500z" fill="#ffa500" stroke="#3a2a10" stroke-width=".5"/><rect x="465.5" y="386" width="38" height="42.500" fill="#ffa500" stroke="#3a2a10" stroke-width=".7"/><rect x="471" y="359.700" width="27.500" height="15.800" fill="#ffa500" stroke="#3a2a10" stroke-width=".7"/><rect x="472.5" y="348.500" width="24" height="9.200" fill="#ffa500" stroke="#3a2a10" stroke-width=".7"/><rect x="480" y="331.500" width="9.400" height="7" fill="#2a2a2a"/><path d="M474 340.500l2.500-2.500h16l2.500 2.500v5l-2.500 2.500h-16l-2.500-2.500z" fill="#4e4e4e" stroke="#1a1a1a" stroke-width=".7"/><rect x="480.3" y="338.300" width="8.800" height="9.400" fill="url(#gNut)"/><path d="M480 338v10M489.4 338v10" stroke="#222" stroke-width=".6"/><rect x="480" y="348" width="9" height="56" fill="url(#gRod)" stroke="#3a2a10" stroke-width=".5"/><rect x="480.3" y="348" width="8.600" height="9.500" fill="#2a2a2a"/><path d="M476 403.500h17.500v2.500h-17.500z" fill="#5a3400"/><rect x="476.8" y="404" width="3.400" height="15.700" fill="#6a3c00"/><rect x="489.2" y="404" width="3.400" height="15.700" fill="#6a3c00"/><rect x="480" y="403.300" width="9.400" height="16.400" rx="3.500" fill="url(#gBall)" stroke="#4a2800" stroke-width=".5"/><path d="M475.5 408.700h-2.800v4.700h2.800M494 408.700h2.800v4.700h-2.800" fill="none" stroke="#b07800" stroke-width=".9"/><rect x="473" y="419.700" width="22.600" height="8.800" fill="#ffae28" stroke="#3a2a10" stroke-width=".5"/><path d="M478.5 419.700v8.800M490 419.700v8.800" stroke="#3a2a10" stroke-width=".5"/><rect x="537.5" y="386" width="38" height="42.500" fill="#ffa500" stroke="#3a2a10" stroke-width=".7"/><rect x="543" y="359.700" width="27.500" height="15.800" fill="#ffa500" stroke="#3a2a10" stroke-width=".7"/><rect x="544.5" y="348.500" width="24" height="9.200" fill="#ffa500" stroke="#3a2a10" stroke-width=".7"/><rect x="552" y="331.500" width="9.400" height="7" fill="#2a2a2a"/><path d="M546 340.500l2.500-2.500h16l2.500 2.500v5l-2.500 2.500h-16l-2.500-2.500z" fill="#4e4e4e" stroke="#1a1a1a" stroke-width=".7"/><rect x="552.3" y="338.300" width="8.800" height="9.400" fill="url(#gNut)"/><path d="M552 338v10M561.4 338v10" stroke="#222" stroke-width=".6"/><rect x="552" y="348" width="9" height="56" fill="url(#gRod)" stroke="#3a2a10" stroke-width=".5"/><rect x="552.3" y="348" width="8.600" height="9.500" fill="#2a2a2a"/><path d="M548 403.500h17.500v2.500h-17.500z" fill="#5a3400"/><rect x="548.8" y="404" width="3.400" height="15.700" fill="#6a3c00"/><rect x="561.2" y="404" width="3.400" height="15.700" fill="#6a3c00"/><rect x="552" y="403.300" width="9.400" height="16.400" rx="3.500" fill="url(#gBall)" stroke="#4a2800" stroke-width=".5"/><path d="M547.5 408.700h-2.800v4.700h2.800M566 408.700h2.800v4.700h-2.800" fill="none" stroke="#b07800" stroke-width=".9"/><rect x="545" y="419.700" width="22.600" height="8.800" fill="#ffae28" stroke="#3a2a10" stroke-width=".5"/><path d="M550.5 419.700v8.800M562 419.700v8.800" stroke="#3a2a10" stroke-width=".5"/><path d="M394.200 428.200H583.400V330.400H677.200V483H394.200z" fill="#ffa500" stroke="#3a2a10" stroke-width=".7"/><path d="M583.400 354.500h93.800" stroke="#4a3008" stroke-width=".9"/><path d="M587 330.400v-9q0-2.400 2.400-2.400h11.600q2.400 0 2.400 2.400v9z" fill="url(#gBolt)" stroke="#4a4a4a" stroke-width=".6"/><path d="M656 330.400v-9q0-2.400 2.400-2.400h11.600q2.400 0 2.400 2.400v9z" fill="url(#gBolt)" stroke="#4a4a4a" stroke-width=".6"/><rect x="603" y="317.500" width="53.500" height="12.900" fill="url(#gCap)" stroke="#3a2a10" stroke-width=".4"/><path d="M600.100 318.300v-1.500l2-2h55.200l2 2v1.500z" fill="url(#gLip)" stroke="#7a4a00" stroke-width=".4"/><rect x="158.500" y="599.500" width="18" height="17.500" fill="#cecece" stroke="#bcbcbc" stroke-width=".8"/><path d="M157.300 613.500V592" stroke="#1030ff" stroke-width="2.200"/><path d="M157.300 586l-2.200 9h4.400z" fill="#1030ff"/><path d="M161 618.300h22" stroke="#d42828" stroke-width="1.800"/><path d="M189 618.300l-9-2.100v4.200z" fill="#d42828"/><circle cx="157.300" cy="618.300" r="4.300" fill="url(#gSph)"/><text x="157.300" y="621.300" font-size="8" font-family="Liberation Sans,sans-serif" fill="#28a040" text-anchor="middle" font-weight="bold">Y</text><text x="154" y="586.500" font-size="11" font-family="Liberation Sans,sans-serif" fill="#2848ff">Z</text><text x="190.300" y="622.800" font-size="11" font-family="Liberation Sans,sans-serif" fill="#d02828">X</text>
</svg>
<div class="abs hl" style="top:701px"></div><div class="abs" style="left:457px;top:702px;width:1px;height:8px;background:#e3e3e3"></div>
<svg id="bt" width="1048" height="710" viewBox="0 0 1048 710">
<g transform="translate(266,673.5)"><path d="M0.500 0.500L17 4.500V22.500L0.500 18Z" fill="#e4f0e4" stroke="#333" stroke-width="1.100"/><path d="M3 4L10 5.800V10.500L3 8.800ZM3 11.500L7 12.500V17.500L3 16.500ZM9 13L14.500 14.300V19.300L9 18ZM12 6.500L14.500 7V11L12 10.500Z" fill="#fff" stroke="#444" stroke-width=".9"/><path d="M17 0l1 4.500 5-1.500-3.500 3.500 3.500 3-4.500-0.500-1 4.500-1.500-4-4.500 1.500 3-3.500-3.500-3 4.500 0.500z" fill="#f8ec40" stroke="#d8c020" stroke-width=".4"/><path d="M12 12l4-4M23 2l-3 3M22 11l-3-2.500" stroke="#a8c8f0" stroke-width=".8"/></g><g transform="translate(296,673.5)"><rect x="0.500" y="0.500" width="23" height="22" fill="#dadada" stroke="#bcbcbc"/><path d="M2.500 5l6 16" stroke="#909090" stroke-width="1.300"/><path d="M3 5c4-3 9 1.500 16-2.500l3 10c-6 4-11-1-16 2z" fill="#f6f6f6" stroke="#a0a0a0" stroke-width=".7"/><rect x="5.5" y="5" width="3" height="3" fill="#8c8c8c" transform="rotate(-12 5.5 5)"/><rect x="11.5" y="5.5" width="3" height="3" fill="#8c8c8c" transform="rotate(-12 11.5 5.5)"/><rect x="17" y="4" width="3" height="3" fill="#8c8c8c" transform="rotate(-12 17 4)"/><rect x="8.5" y="8" width="3" height="3" fill="#8c8c8c" transform="rotate(-12 8.5 8)"/><rect x="14.5" y="7.8" width="3" height="3" fill="#8c8c8c" transform="rotate(-12 14.5 7.8)"/><rect x="7" y="11.5" width="3" height="3" fill="#8c8c8c" transform="rotate(-12 7 11.5)"/><rect x="12.5" y="11.5" width="3" height="3" fill="#8c8c8c" transform="rotate(-12 12.5 11.5)"/><rect x="18" y="10.5" width="3" height="3" fill="#8c8c8c" transform="rotate(-12 18 10.5)"/><rect x="20" y="7.5" width="3" height="3" fill="#8c8c8c" transform="rotate(-12 20 7.5)"/></g><g transform="translate(376.5,674.5)"><path d="M2 0v12c0 7 8 7 8 0c0-8 8.500-8 8.500 0v6" fill="none" stroke="#222" stroke-width="1.200"/><circle cx="2" cy="12" r="1.8" fill="#e03426"/><circle cx="10" cy="12" r="1.8" fill="#e03426"/><circle cx="18.5" cy="12" r="1.8" fill="#e03426"/></g><g transform="translate(409,674.5)"><g transform="translate(0,0) scale(1.05)"><path d="M1 16.800L17 1" stroke="#3a3a3a" stroke-width="1"/><circle cx="1" cy="16.8" r="2" fill="#e03426"/><circle cx="17" cy="1" r="2" fill="#e03426"/></g></g><g transform="translate(439,675)"><g transform="translate(0,0) scale(1.05)"><path d="M1.300 0.600C10 0 17.500 6 19.500 16.500" fill="none" stroke="#3a3a3a" stroke-width="1.100"/><circle cx="1.3" cy="0.6" r="2" fill="#e03426"/><circle cx="14.3" cy="4.1" r="2" fill="#e03426"/><circle cx="19.5" cy="16.5" r="2" fill="#e03426"/></g></g><g transform="translate(469.5,674.5)"><circle cx="10.500" cy="10.500" r="10" fill="none" stroke="#222" stroke-width="1.200"/></g><g transform="translate(501,674)"><path d="M0.500 1h10c6 0 9 3 9 9v10" fill="none" stroke="#b0b0b0" stroke-width="1.200"/><path d="M10.500 1h9v9" fill="none" stroke="#c8c8c8" stroke-width=".8" stroke-dasharray="1 1"/></g><g transform="translate(531,674)"><path d="M0.500 1h9l11 10v9" fill="none" stroke="#b0b0b0" stroke-width="1.200"/><path d="M9.500 1h11v10" fill="none" stroke="#c8c8c8" stroke-width=".8" stroke-dasharray="1 1"/></g><g transform="translate(563,677.5)"><rect x="1" y="1.500" width="19" height="12.500" fill="none" stroke="#222" stroke-width="1.300"/><circle cx="1" cy="1.5" r="1.9" fill="#e03426"/><circle cx="20" cy="14" r="1.9" fill="#e03426"/></g><g transform="translate(594,674)"><g transform="translate(0,0) scale(0.95)"><path d="M5.900 0.400L2.500 9.300M5.900 0.400L9.500 9M13.800 17.800L10.500 10M13.800 17.800L17.500 9.500" fill="none" stroke="#9a9a9a" stroke-width=".8"/><path d="M0.900 9.900L5.900 7.900C9 7.500 10.500 11 13.800 11.800L19.900 7.900" fill="none" stroke="#3a3a3a" stroke-width="1"/><circle cx="5.9" cy="0.4" r="1.8" fill="#8e8e8e"/><circle cx="0.9" cy="9.9" r="1.8" fill="#8e8e8e"/><circle cx="19.9" cy="7.9" r="1.8" fill="#8e8e8e"/><circle cx="13.8" cy="17.8" r="1.8" fill="#8e8e8e"/><circle cx="5.9" cy="7.9" r="2" fill="#e03426"/><circle cx="13.8" cy="11.8" r="2" fill="#e03426"/></g></g><g transform="translate(628,676.5)"><path d="M8 0v16M0 8h16" stroke="#222" stroke-width="1.400"/></g><g transform="translate(655.5,675)"><path d="M0.500 18.800V6.500L5.600 1.400H13.600V4.500C17.500 4.500 20.100 7.500 20.100 11C20.100 16 16 18.800 13.600 18.800Z" fill="#fff" stroke="#8c8c8c" stroke-width="1.100"/><path d="M3.400 15.200V8.700C3.400 6.500 5 5 6.800 5C8.800 5 10 6.300 10 8C11 7 12.500 6.800 14 7.200C16 8 16.800 10 16.300 11.500C15.800 13.500 14 15.200 12.900 15.200Z" fill="none" stroke="#a4a4a4" stroke-width="1"/></g><g transform="translate(704.5,674)"><path d="M-0.800 14.300H8.700M1.800 -0.300L13.500 21.200" fill="none" stroke="#b0b0b0" stroke-width="1.200"/><path d="M8.700 14.300h12" stroke="#b8b8b8" stroke-width="1" stroke-dasharray="1 1"/><path d="M11 10.500l6-5.500 2.800 2.500-6 5.500z" fill="#e6e6e6" stroke="#c4c4c4" stroke-width=".7"/></g><g transform="translate(735,674)"><path d="M0.200 14.300H10.800M3.100 -0.300L13.400 21.200" fill="none" stroke="#b0b0b0" stroke-width="1.200"/><path d="M10.800 13.800L12 10.500L19 3.500L21.500 6L14.500 13Z" fill="#ececec" stroke="#b4b4b4" stroke-width=".8"/><path d="M12 10.500L14.500 13" stroke="#b4b4b4" stroke-width=".7"/></g><g transform="translate(766,674)"><path d="M0.100 9.200H13.300V21.500" fill="none" stroke="#b0b0b0" stroke-width="1.300"/><path d="M13.300 -0.300V9.200H22" fill="none" stroke="#bcbcbc" stroke-width="1" stroke-dasharray="1 1"/><path d="M8.200 4L18.500 14.300" stroke="#b0b0b0" stroke-width="1"/></g><g transform="translate(802,674)"><path d="M1.400 7.500V16.900M22.500 7.500V16.900M1.400 11.800H22.500" stroke="#b0b0b0" stroke-width="1.100" fill="none"/><path d="M1.400 11.800l4-2v4zM22.500 11.800l-4-2v4z" fill="#b0b0b0"/><path d="M17.700 0.600L10 9.500h4L7.400 16.900L17 7.500h-4.200z" fill="#dcdcdc" stroke="#bcbcbc" stroke-width=".6"/></g><g transform="translate(852.5,676)"><path d="M0.500 12l9-9M5.500 13l9-9" stroke="#b0b0b0" stroke-width="1.200"/><path d="M15 8v9M10.500 17.500h9" stroke="#b0b0b0" stroke-width="1.200"/></g><g transform="translate(883,674)"><path d="M1.500 2.300V19.500M20.300 2.300V19.500" stroke="#bcbcbc" stroke-width="2.200"/><path d="M0.500 2.300H5.500M21.300 2.300H16.300" stroke="#bcbcbc" stroke-width="1.200"/><path d="M10.400 0.500V21.500" stroke="#8e8e8e" stroke-width="1.100" stroke-dasharray="6 2"/><path d="M9.300 2.600l-3-2v4zM11.500 2.600l3-2v4z" fill="#a0a0a0"/><path d="M4 2.600h3M17.800 2.600h-3" stroke="#a0a0a0" stroke-width=".8"/></g><g transform="translate(913.5,674)"><path d="M0 6l6 4.500-6 4.500z" fill="#c0c0c0"/><path d="M9 11l10-10M13.500 12.500l10-10" stroke="#b0b0b0" stroke-width="1.200"/><path d="M16.500 11v10M11.500 21.500h10" stroke="#b0b0b0" stroke-width="1.200"/></g><g transform="translate(962,673.5)"><rect x="2.500" y="0.500" width="10" height="9" fill="#fff" stroke="#8a8a8a"/><rect x="10.500" y="12.500" width="11" height="9" fill="#fff" stroke="#666"/><rect x="0.500" y="14.500" width="6" height="6" fill="#fff" stroke="#8a8a8a"/><path d="M2 19l3-3M5 16h-2M5 16v2" stroke="#666" stroke-width=".8" fill="none"/><path d="M12 12l7-8 2.500 2-7 8z" fill="#d8d8d8" stroke="#9a9a9a" stroke-width=".8"/></g><g transform="translate(992.5,673.5)"><path d="M8 2a6 6 0 1 0 4 10" fill="none" stroke="#b0b0b0" stroke-width="2.200"/><path d="M6 0l5 2-4 4z" fill="#b0b0b0"/><path d="M9 12l9-10 3 2.500-9 10z" fill="#d8d8d8" stroke="#9a9a9a" stroke-width=".8"/><path d="M0.500 15.500l6-3 8 2v5l-6 3-8-2z" fill="#dcdcdc" stroke="#a8a8a8" stroke-width=".8"/><rect x="13.500" y="13.500" width="9" height="8" rx="1" fill="#d0d0d0" stroke="#9a9a9a"/><path d="M15.500 13.500v-2.500a2.500 2.500 0 0 1 5 0v2.500" fill="none" stroke="#a8a8a8" stroke-width="1.300"/></g><g transform="translate(1024.5,673.5)"><path d="M8 2a6 6 0 1 0 4 10" fill="none" stroke="#b0b0b0" stroke-width="2.200"/><path d="M6 0l5 2-4 4z" fill="#b0b0b0"/><path d="M0.500 16.500l8-3.500 14 3v4l-8 3-14-3z" fill="#dcdcdc" stroke="#a8a8a8" stroke-width=".8"/><path d="M10 7h5v10h-5z" fill="#e4e4e4" stroke="#a8a8a8" stroke-width=".8"/></g><rect x="258" y="672" width="2" height="2" fill="#d2d2d2"/><rect x="257" y="671" width="2" height="2" fill="#949494"/><rect x="258" y="676" width="2" height="2" fill="#d2d2d2"/><rect x="257" y="675" width="2" height="2" fill="#949494"/><rect x="258" y="680" width="2" height="2" fill="#d2d2d2"/><rect x="257" y="679" width="2" height="2" fill="#949494"/><rect x="258" y="684" width="2" height="2" fill="#d2d2d2"/><rect x="257" y="683" width="2" height="2" fill="#949494"/><rect x="258" y="688" width="2" height="2" fill="#d2d2d2"/><rect x="257" y="687" width="2" height="2" fill="#949494"/><rect x="258" y="692" width="2" height="2" fill="#d2d2d2"/><rect x="257" y="691" width="2" height="2" fill="#949494"/><rect x="258" y="696" width="2" height="2" fill="#d2d2d2"/><rect x="257" y="695" width="2" height="2" fill="#949494"/><rect x="696" y="671" width="1" height="27" fill="#cdcdcd"/><rect x="795" y="671" width="1" height="27" fill="#cdcdcd"/><rect x="844" y="671" width="1" height="27" fill="#cdcdcd"/><rect x="955" y="671" width="1" height="27" fill="#cdcdcd"/><path d="M685.2 683.0h5.600l-2.800 3.200z" fill="#000"/><path d="M833.2 683.0h5.600l-2.800 3.200z" fill="#000"/><path d="M944.2 683.0h5.600l-2.800 3.200z" fill="#000"/><text x="324.500" y="688.500" font-size="11" font-family="Liberation Sans,Noto Sans CJK SC,sans-serif" fill="#b4b4b4">完成草图</text><rect x="0" y="708" width="22" height="2" fill="#8a8a8a"/><rect x="35" y="708" width="7" height="2" fill="#f0c848"/><rect x="50" y="707" width="1.5" height="3" fill="#3858d8"/><rect x="92" y="708" width="4" height="2" fill="#4858d0"/><rect x="109" y="707.5" width="5" height="2.5" fill="#3838b0"/><rect x="118.5" y="707.5" width="5" height="2.5" fill="#3838b0"/><rect x="152.5" y="707" width="1.5" height="3" fill="#b838a0"/><rect x="183" y="708" width="7" height="2" fill="#8890b0"/><rect x="209" y="708" width="7" height="2" fill="#f0c848"/><rect x="247.5" y="708" width="7" height="2" fill="#222"/><rect x="281" y="708.5" width="8" height="1.5" fill="#b0b0b0"/><rect x="317" y="708" width="7" height="2" fill="#e8d048"/><rect x="345" y="708.5" width="17" height="1.5" fill="#c4c4c4"/><rect x="386.5" y="708" width="8" height="2" fill="#5868b8"/><rect x="418" y="708.5" width="9" height="1.5" fill="#a8a8a8"/><rect x="166" y="706" width="1" height="4" fill="#cdcdcd"/><rect x="265" y="706" width="1" height="4" fill="#cdcdcd"/><rect x="302" y="706" width="1" height="4" fill="#cdcdcd"/><rect x="402" y="706" width="1" height="4" fill="#cdcdcd"/>
</svg>
</body></html>
